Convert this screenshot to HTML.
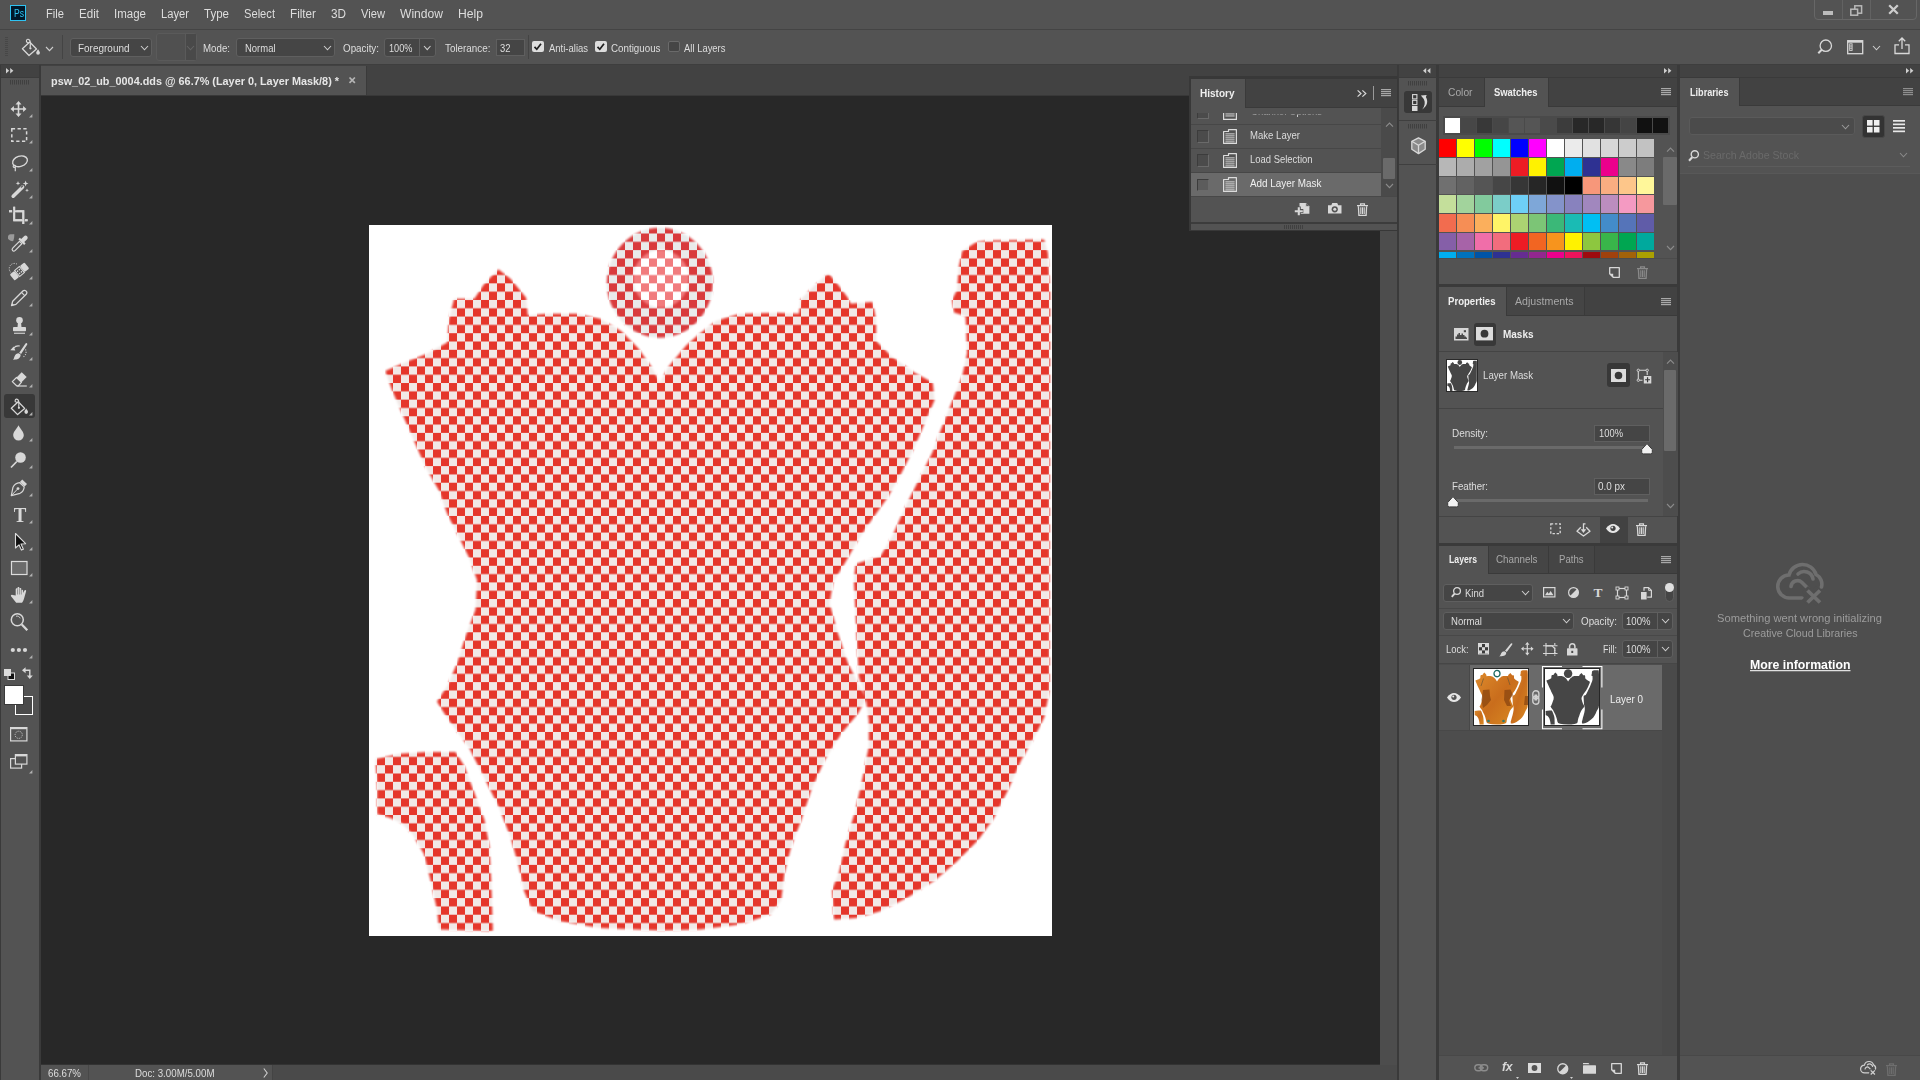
<!DOCTYPE html>
<html lang="en"><head><meta charset="utf-8"><title>Photoshop</title>
<style>
html,body{margin:0;padding:0;}
body{width:1920px;height:1080px;overflow:hidden;background:#535353;position:relative;
font-family:"Liberation Sans",sans-serif;}
.a{position:absolute;box-sizing:border-box;}
.t{white-space:nowrap;transform-origin:0 50%;}
svg{overflow:visible;}
</style></head>
<body>
<div class="a " style="left:0px;top:0px;width:1920px;height:30px;background:#535353;"></div>
<div class="a " style="left:0px;top:29px;width:1920px;height:1px;background:#444444;"></div>
<div class="a " style="left:0px;top:30px;width:1920px;height:35px;background:#535353;"></div>
<div class="a " style="left:0px;top:64px;width:1920px;height:1px;background:#3e3e3e;"></div>
<div class="a " style="left:1814px;top:-2px;width:103px;height:22px;border:1px solid #676767;border-radius:0 0 4px 4px;"></div>
<div class="a " style="left:1842px;top:0px;width:1px;height:19px;background:#626262;"></div>
<div class="a " style="left:1869.5px;top:0px;width:1px;height:19px;background:#626262;"></div>
<div class="a " style="left:0px;top:65px;width:41px;height:1015px;background:#3a3a3a;"></div>
<div class="a " style="left:1px;top:65px;width:38px;height:1015px;background:#535353;"></div>
<div class="a " style="left:1px;top:65px;width:38px;height:13px;background:#424242;"></div>
<div class="a " style="left:1px;top:77px;width:38px;height:1px;background:#3c3c3c;"></div>
<div class="a " style="left:4px;top:393.5px;width:31px;height:24.5px;background:#383838;border-radius:3px;"></div>
<div class="a " style="left:41px;top:65px;width:1357px;height:31px;background:#424242;"></div>
<div class="a " style="left:41px;top:66px;width:326px;height:30px;background:#535353;"></div>
<div class="a " style="left:366px;top:66px;width:1px;height:30px;background:#3a3a3a;"></div>
<div class="a " style="left:41px;top:95px;width:1357px;height:1px;background:#383838;"></div>
<div class="a " style="left:41px;top:96px;width:1339px;height:969px;background:#282828;"></div>
<div class="a " style="left:1380px;top:96px;width:17px;height:969px;background:#4d4d4d;"></div>
<div class="a " style="left:41px;top:1065px;width:1357px;height:15px;background:#4a4a4a;"></div>
<div class="a " style="left:41px;top:1065px;width:232px;height:15px;background:#535353;"></div>
<div class="a " style="left:41px;top:1064px;width:1339px;height:1px;background:#333333;"></div>
<div class="a " style="left:88px;top:1065px;width:1px;height:15px;background:#484848;"></div>
<div class="a " style="left:272px;top:1065px;width:1px;height:15px;background:#444444;"></div>
<div class="a " style="left:1397px;top:65px;width:2px;height:1015px;background:#3a3a3a;"></div>
<div class="a " style="left:1399px;top:65px;width:38px;height:1015px;background:#535353;"></div>
<div class="a " style="left:1399px;top:65px;width:38px;height:13px;background:#424242;"></div>
<div class="a " style="left:1436px;top:65px;width:3px;height:1015px;background:#3a3a3a;"></div>
<div class="a " style="left:1399px;top:77px;width:38px;height:1px;background:#3c3c3c;"></div>
<div class="a " style="left:1399px;top:120px;width:38px;height:1px;background:#3f3f3f;"></div>
<div class="a " style="left:1399px;top:164px;width:38px;height:1px;background:#3f3f3f;"></div>
<div class="a " style="left:1404px;top:91px;width:28px;height:22px;background:#383838;border-radius:3px;"></div>
<div class="a " style="left:1439px;top:65px;width:238px;height:1015px;background:#535353;"></div>
<div class="a " style="left:1439px;top:65px;width:238px;height:13px;background:#424242;"></div>
<div class="a " style="left:1677px;top:65px;width:3px;height:1015px;background:#3a3a3a;"></div>
<div class="a " style="left:1439px;top:78px;width:238px;height:28.5px;background:#424242;"></div>
<div class="a " style="left:1439px;top:78px;width:46px;height:27.5px;background:#454545;"></div>
<div class="a " style="left:1485px;top:78px;width:63px;height:28.5px;background:#535353;"></div>
<div class="a " style="left:1484px;top:78px;width:1px;height:28.5px;background:#3a3a3a;"></div>
<div class="a " style="left:1548px;top:78px;width:1px;height:28.5px;background:#3a3a3a;"></div>
<div class="a " style="left:1439px;top:77px;width:238px;height:1px;background:#3a3a3a;"></div>
<div class="a " style="left:1439px;top:105.5px;width:46px;height:1px;background:#3a3a3a;"></div>
<div class="a " style="left:1549px;top:105.5px;width:128px;height:1px;background:#3a3a3a;"></div>
<div class="a " style="left:1443px;top:116px;width:227px;height:19px;background:#4a4a4a;"></div>
<div class="a " style="left:1663px;top:157px;width:14px;height:48px;background:#6a6a6a;border-radius:1px;"></div>
<div class="a " style="left:1439px;top:258.3px;width:238px;height:1px;background:#4b4b4b;"></div>
<div class="a " style="left:1439px;top:284px;width:238px;height:3px;background:#3a3a3a;"></div>
<div class="a " style="left:1439px;top:287px;width:238px;height:29px;background:#424242;"></div>
<div class="a " style="left:1439px;top:287px;width:67px;height:29px;background:#535353;"></div>
<div class="a " style="left:1506px;top:287px;width:1px;height:29px;background:#3a3a3a;"></div>
<div class="a " style="left:1584px;top:287px;width:1px;height:28px;background:#3a3a3a;"></div>
<div class="a " style="left:1507px;top:287px;width:77px;height:28px;background:#454545;"></div>
<div class="a " style="left:1507px;top:315px;width:170px;height:1px;background:#3a3a3a;"></div>
<div class="a " style="left:1474px;top:323px;width:22px;height:23px;background:#383838;border-radius:3px;"></div>
<div class="a " style="left:1439px;top:351px;width:238px;height:1px;background:#444444;"></div>
<div class="a " style="left:1439px;top:408px;width:224px;height:1px;background:#444444;"></div>
<div class="a " style="left:1663px;top:352px;width:15px;height:164px;background:#4d4d4d;"></div>
<div class="a " style="left:1664px;top:370px;width:12px;height:81px;background:#6a6a6a;border-radius:1px;"></div>
<div class="a " style="left:1607px;top:363px;width:23px;height:24px;background:#383838;border-radius:3px;"></div>
<div class="a " style="left:1594px;top:425px;width:56px;height:17px;background:#454545;border:1px solid #5f5f5f;"></div>
<div class="a " style="left:1594px;top:478px;width:56px;height:17px;background:#454545;border:1px solid #5f5f5f;"></div>
<div class="a " style="left:1454px;top:445.5px;width:194px;height:3px;background:#6a6a6a;"></div>
<div class="a " style="left:1454px;top:498.5px;width:194px;height:3px;background:#6a6a6a;"></div>
<div class="a " style="left:1439px;top:516px;width:238px;height:1px;background:#444444;"></div>
<div class="a " style="left:1600px;top:517px;width:28px;height:26px;background:#424242;"></div>
<div class="a " style="left:1439px;top:543px;width:238px;height:3px;background:#3a3a3a;"></div>
<div class="a " style="left:1439px;top:546px;width:238px;height:28px;background:#424242;"></div>
<div class="a " style="left:1439px;top:546px;width:49px;height:28px;background:#535353;"></div>
<div class="a " style="left:1488px;top:546px;width:1px;height:28px;background:#3a3a3a;"></div>
<div class="a " style="left:1548px;top:546px;width:1px;height:27px;background:#3a3a3a;"></div>
<div class="a " style="left:1594px;top:546px;width:1px;height:27px;background:#3a3a3a;"></div>
<div class="a " style="left:1489px;top:546px;width:59px;height:27px;background:#454545;"></div>
<div class="a " style="left:1549px;top:546px;width:45px;height:27px;background:#454545;"></div>
<div class="a " style="left:1489px;top:573px;width:188px;height:1px;background:#3a3a3a;"></div>
<div class="a " style="left:1442.5px;top:584px;width:90px;height:18px;background:#454545;border:1px solid #5f5f5f;border-radius:3px;"></div>
<div class="a " style="left:1439px;top:608px;width:238px;height:1px;background:#484848;"></div>
<div class="a " style="left:1442.5px;top:612px;width:131px;height:18px;background:#454545;border:1px solid #5f5f5f;border-radius:3px;"></div>
<div class="a " style="left:1621.5px;top:612px;width:51.5px;height:18px;background:#454545;border:1px solid #5f5f5f;border-radius:3px;"></div>
<div class="a " style="left:1657px;top:613px;width:1px;height:16px;background:#5f5f5f;"></div>
<div class="a " style="left:1439px;top:635px;width:238px;height:1px;background:#484848;"></div>
<div class="a " style="left:1621.5px;top:640px;width:51.5px;height:18px;background:#454545;border:1px solid #5f5f5f;border-radius:3px;"></div>
<div class="a " style="left:1657px;top:641px;width:1px;height:16px;background:#5f5f5f;"></div>
<div class="a " style="left:1439px;top:663.3px;width:238px;height:1.5px;background:#464646;"></div>
<div class="a " style="left:1439px;top:664px;width:238px;height:391px;background:#4a4a4a;"></div>
<div class="a " style="left:1439px;top:664px;width:223px;height:391px;background:#4d4d4d;"></div>
<div class="a " style="left:1439px;top:664.8px;width:31px;height:66px;background:#535353;"></div>
<div class="a " style="left:1470px;top:664.8px;width:192px;height:66px;background:#6a6a6a;"></div>
<div class="a " style="left:1469px;top:664.8px;width:1px;height:66px;background:#484848;"></div>
<div class="a " style="left:1439px;top:730px;width:223px;height:1px;background:#484848;"></div>
<div class="a " style="left:1439px;top:1055px;width:238px;height:1px;background:#484848;"></div>
<div class="a " style="left:1664.5px;top:584px;width:9px;height:18px;background:#454545;border:1px solid #5f5f5f;border-radius:5px;"></div>
<div class="a " style="left:1664.5px;top:583px;width:9px;height:9px;background:#e0e0e0;border-radius:5px;"></div>
<div class="a " style="left:1680px;top:65px;width:240px;height:1015px;background:#535353;"></div>
<div class="a " style="left:1680px;top:65px;width:240px;height:13px;background:#424242;"></div>
<div class="a " style="left:1680px;top:77px;width:240px;height:1px;background:#3a3a3a;"></div>
<div class="a " style="left:1680px;top:78px;width:240px;height:28px;background:#424242;"></div>
<div class="a " style="left:1680px;top:78px;width:59px;height:28px;background:#535353;"></div>
<div class="a " style="left:1739px;top:78px;width:1px;height:28px;background:#3a3a3a;"></div>
<div class="a " style="left:1740px;top:105px;width:180px;height:1px;background:#3a3a3a;"></div>
<div class="a " style="left:1680px;top:173px;width:240px;height:882px;background:#4e4e4e;"></div>
<div class="a " style="left:1680px;top:173px;width:240px;height:1px;background:#585858;"></div>
<div class="a " style="left:1689px;top:117px;width:165.5px;height:18px;background:#4b4b4b;border:1px solid #5a5a5a;border-radius:3px;"></div>
<div class="a " style="left:1862px;top:114.5px;width:22.5px;height:23.5px;background:#333333;border-radius:3px;border:1px solid #484848;"></div>
<div class="a " style="left:1688px;top:166px;width:222px;height:1px;background:#5c5c5c;"></div>
<div class="a " style="left:1680px;top:1055px;width:240px;height:1px;background:#484848;"></div>
<div class="a " style="left:1189px;top:76px;width:209px;height:155px;background:#383838;"></div>
<div class="a " style="left:1191px;top:79px;width:206px;height:28px;background:#424242;"></div>
<div class="a " style="left:1191px;top:79px;width:54px;height:29px;background:#535353;"></div>
<div class="a " style="left:1245px;top:79px;width:1px;height:28px;background:#3a3a3a;"></div>
<div class="a " style="left:1245px;top:107px;width:152px;height:1px;background:#3a3a3a;"></div>
<div class="a " style="left:1191px;top:108px;width:206px;height:114px;background:#535353;"></div>
<div class="a " style="left:1191px;top:108px;width:190px;height:16.5px;background:#535353;"></div>
<div class="a " style="left:1191px;top:124.3px;width:190px;height:24.200000000000003px;background:#535353;"></div>
<div class="a " style="left:1191px;top:148.4px;width:190px;height:24.19999999999999px;background:#535353;"></div>
<div class="a " style="left:1191px;top:172.5px;width:190px;height:24.19999999999999px;background:#6a6a6a;"></div>
<div class="a " style="left:1191px;top:124.0px;width:190px;height:1px;background:#474747;"></div>
<div class="a " style="left:1197px;top:113px;width:12px;height:5.599999999999994px;background:#4b4b4b;border-left:1px solid #3c3c3c;border-right:1px solid #6a6a6a;border-bottom:1px solid #6a6a6a;"></div>
<div class="a " style="left:1191px;top:148.0px;width:190px;height:1px;background:#474747;"></div>
<div class="a " style="left:1197px;top:130.3px;width:12px;height:12.299999999999983px;background:#4b4b4b;border-left:1px solid #3c3c3c;border-right:1px solid #6a6a6a;border-bottom:1px solid #6a6a6a;border-top:1px solid #3c3c3c;"></div>
<div class="a " style="left:1191px;top:172.1px;width:190px;height:1px;background:#474747;"></div>
<div class="a " style="left:1197px;top:154.4px;width:12px;height:12.300000000000011px;background:#4b4b4b;border-left:1px solid #3c3c3c;border-right:1px solid #6a6a6a;border-bottom:1px solid #6a6a6a;border-top:1px solid #3c3c3c;"></div>
<div class="a " style="left:1191px;top:196.2px;width:190px;height:1px;background:#474747;"></div>
<div class="a " style="left:1197px;top:178.5px;width:12px;height:12.300000000000011px;background:#5c5c5c;border-left:1px solid #3c3c3c;border-right:1px solid #6a6a6a;border-bottom:1px solid #6a6a6a;border-top:1px solid #3c3c3c;"></div>
<div class="a " style="left:1381px;top:108px;width:16px;height:88px;background:#4a4a4a;"></div>
<div class="a " style="left:1383px;top:158px;width:12px;height:21px;background:#6a6a6a;border-radius:1px;"></div>
<div class="a " style="left:1191px;top:196px;width:206px;height:1px;background:#484848;"></div>
<div class="a " style="left:1191px;top:221.6px;width:206px;height:2px;background:#3c3c3c;"></div>
<div class="a " style="left:1191px;top:223.5px;width:206px;height:6px;background:#535353;"></div>
<div class="a " style="left:69.5px;top:38px;width:82px;height:18.5px;background:#454545;border:1px solid #5f5f5f;border-radius:3px;"></div>
<div class="a " style="left:155.5px;top:33px;width:41px;height:28px;background:#505050;border:1px solid #5a5a5a;border-radius:3px;"></div>
<div class="a " style="left:184.5px;top:34px;width:11px;height:26px;background:#494949;border-left:1px solid #5a5a5a;"></div>
<div class="a " style="left:235.5px;top:38px;width:99px;height:18.5px;background:#454545;border:1px solid #5f5f5f;border-radius:3px;"></div>
<div class="a " style="left:384px;top:38px;width:51.5px;height:18.5px;background:#454545;border:1px solid #5f5f5f;border-radius:3px;"></div>
<div class="a " style="left:419px;top:39px;width:1px;height:16.5px;background:#5f5f5f;"></div>
<div class="a " style="left:496px;top:39px;width:28.5px;height:17px;background:#454545;border:1px solid #5f5f5f;"></div>
<div class="a " style="left:62px;top:35px;width:1px;height:24px;background:#444444;"></div>
<div class="a " style="left:528px;top:35px;width:1px;height:24px;background:#444444;"></div>
<div class="a " style="left:532px;top:40.5px;width:11.5px;height:11.5px;background:#dddddd;border-radius:2px;"></div>
<div class="a " style="left:595px;top:40.5px;width:11.5px;height:11.5px;background:#dddddd;border-radius:2px;"></div>
<div class="a " style="left:668px;top:40.5px;width:11.5px;height:11.5px;background:#454545;border:1px solid #6a6a6a;border-radius:2px;"></div>
<svg class="a" style="left:0;top:0" width="1400" height="1000" viewBox="0 0 1400 1000">
<defs>
<pattern id="ck" x="1" y="0.88" width="16" height="16.6154" patternUnits="userSpaceOnUse">
<rect width="16" height="16.6154" fill="#f1e8e6"/><rect width="8" height="8.3077" fill="#e5362b"/><rect x="8" y="8.3077" width="8" height="8.3077" fill="#e5362b"/></pattern>
<pattern id="ck2" x="1" y="0.88" width="16" height="16.6154" patternUnits="userSpaceOnUse">
<rect width="16" height="16.6154" fill="#e9eaea"/><rect width="8" height="8.3077" fill="#d93a3c"/><rect x="8" y="8.3077" width="8" height="8.3077" fill="#d93a3c"/></pattern>
<pattern id="ck3" x="1" y="0.88" width="16" height="16.6154" patternUnits="userSpaceOnUse">
<rect width="16" height="16.6154" fill="#ffffff"/><rect width="8" height="8.3077" fill="#f17c7e"/><rect x="8" y="8.3077" width="8" height="8.3077" fill="#f17c7e"/></pattern>
<filter id="bl" x="-5%" y="-5%" width="110%" height="110%"><feGaussianBlur stdDeviation="1.1"/></filter>
<mask id="mk" maskUnits="userSpaceOnUse" x="360" y="220" width="700" height="720"><g filter="url(#bl)" fill="#fff" stroke="#fff" stroke-width="2.4" stroke-linejoin="round"><polygon points="386.7,371.7 410.0,361.7 426.7,355.0 448.3,343.3 450.0,320.0 455.0,300.0 475.0,300.0 485.0,285.0 498.3,270.7 510.0,280.0 525.0,298.3 526.7,316.7 546.7,315.0 576.7,315.0 600.0,320.0 620.0,331.7 636.7,348.3 650.0,366.7 660.0,385.0 670.0,366.7 686.7,346.7 700.0,335.0 716.7,322.0 740.0,315.0 776.7,314.0 800.0,315.0 801.7,300.0 815.0,286.7 828.3,275.0 836.7,285.0 846.7,298.3 850.0,305.0 871.7,303.3 875.0,320.0 875.0,341.7 890.0,356.7 913.3,373.3 931.7,383.3 933.3,400.0 923.3,423.3 913.3,446.7 900.0,473.3 886.7,496.7 870.0,520.0 856.7,540.0 843.3,563.3 832.0,582.0 828.3,603.3 836.7,633.3 846.7,663.3 856.7,683.3 865.0,698.3 856.7,713.3 840.0,733.3 823.3,760.0 810.0,790.0 800.0,820.0 790.0,846.7 783.3,873.3 780.0,900.0 770.0,913.3 740.0,923.3 700.0,928.3 660.0,929.3 600.0,926.7 560.0,920.0 533.3,910.0 525.0,890.0 520.0,866.7 511.7,836.7 500.0,806.7 483.3,773.3 470.0,746.7 450.0,720.0 438.3,701.7 448.3,686.7 458.3,663.3 466.7,636.7 476.7,610.0 478.3,580.0 470.0,556.7 460.0,536.7 448.3,513.3 440.0,490.0 426.7,466.7 415.0,440.0 403.3,413.3 393.3,390.0"/><polygon points="963.3,251.7 976.7,243.3 986.7,241.7 1043.3,240.7 1046.7,253.0 1049.0,293.0 1048.3,580.0 1048.3,690.0 1043.3,716.7 1033.3,736.7 1020.0,760.0 1006.7,790.0 993.3,816.7 976.7,840.0 956.7,860.0 933.3,880.0 906.7,896.7 880.0,910.0 856.7,916.7 835.0,918.3 833.3,890.0 840.0,873.3 846.7,843.3 856.7,810.0 863.3,780.0 870.0,746.7 870.0,720.0 866.7,696.7 860.0,676.7 858.3,646.7 856.7,613.3 855.0,580.0 856.7,565.0 881.7,556.7 893.3,536.7 906.7,506.7 920.0,480.0 933.3,453.3 943.3,426.7 953.3,401.7 963.3,376.7 968.3,353.3 966.7,315.0 955.0,311.7 953.3,300.0 958.3,290.0 960.0,266.7"/><polygon points="376.7,760.0 400.0,755.0 426.7,753.3 455.0,753.3 463.3,766.7 473.3,793.3 483.3,820.0 488.3,846.7 490.0,880.0 491.7,930.0 440.0,928.3 438.3,910.0 431.7,880.0 425.0,853.3 413.3,833.3 401.7,821.7 390.0,816.7 378.3,813.3 378.3,786.7"/></g></mask>
<mask id="mk2" maskUnits="userSpaceOnUse" x="590" y="215" width="140" height="140"><g filter="url(#bl)" fill="#fff"><ellipse cx="659.8" cy="282.8" rx="53" ry="55"/></g></mask>
<mask id="mk3" maskUnits="userSpaceOnUse" x="590" y="215" width="140" height="140"><g filter="url(#bl)" fill="#fff"><ellipse cx="661" cy="278.7" rx="28" ry="29"/></g></mask>
</defs>
<rect x="369" y="225" width="683" height="711" fill="#ffffff"/>
<rect x="369" y="225" width="683" height="711" fill="url(#ck)" mask="url(#mk)"/>
<rect x="590" y="215" width="140" height="140" fill="url(#ck2)" mask="url(#mk2)"/>
<rect x="590" y="215" width="140" height="140" fill="url(#ck3)" mask="url(#mk3)"/>
</svg>
<div class="a t" style="left:46px;top:4.67px;font-size:13px;line-height:17px;color:#dddddd;transform:scale(0.8592,1.035);">File</div>
<div class="a t" style="left:79px;top:4.67px;font-size:13px;line-height:17px;color:#dddddd;transform:scale(0.8928,1.035);">Edit</div>
<div class="a t" style="left:114px;top:4.67px;font-size:13px;line-height:17px;color:#dddddd;transform:scale(0.8856,1.035);">Image</div>
<div class="a t" style="left:161px;top:4.67px;font-size:13px;line-height:17px;color:#dddddd;transform:scale(0.8610,1.035);">Layer</div>
<div class="a t" style="left:204px;top:4.67px;font-size:13px;line-height:17px;color:#dddddd;transform:scale(0.8870,1.035);">Type</div>
<div class="a t" style="left:244px;top:4.67px;font-size:13px;line-height:17px;color:#dddddd;transform:scale(0.8579,1.035);">Select</div>
<div class="a t" style="left:290px;top:4.67px;font-size:13px;line-height:17px;color:#dddddd;transform:scale(0.8999,1.035);">Filter</div>
<div class="a t" style="left:331px;top:4.67px;font-size:13px;line-height:17px;color:#dddddd;transform:scale(0.9026,1.035);">3D</div>
<div class="a t" style="left:361px;top:4.67px;font-size:13px;line-height:17px;color:#dddddd;transform:scale(0.8589,1.035);">View</div>
<div class="a t" style="left:400px;top:4.67px;font-size:13px;line-height:17px;color:#dddddd;transform:scale(0.9299,1.035);">Window</div>
<div class="a t" style="left:458px;top:4.67px;font-size:13px;line-height:17px;color:#dddddd;transform:scale(0.9350,1.035);">Help</div>
<div class="a t" style="left:78px;top:40.67px;font-size:11px;line-height:14px;color:#dddddd;transform:scale(0.9055,1.035);">Foreground</div>
<div class="a t" style="left:203px;top:40.67px;font-size:11px;line-height:14px;color:#dddddd;transform:scale(0.8831,1.035);">Mode:</div>
<div class="a t" style="left:244.5px;top:40.67px;font-size:11px;line-height:14px;color:#dddddd;transform:scale(0.8603,1.035);">Normal</div>
<div class="a t" style="left:343px;top:40.67px;font-size:11px;line-height:14px;color:#dddddd;transform:scale(0.8922,1.035);">Opacity:</div>
<div class="a t" style="left:389px;top:40.67px;font-size:11px;line-height:14px;color:#dddddd;transform:scale(0.8352,1.035);">100%</div>
<div class="a t" style="left:444.5px;top:40.67px;font-size:11px;line-height:14px;color:#dddddd;transform:scale(0.8964,1.035);">Tolerance:</div>
<div class="a t" style="left:500px;top:40.67px;font-size:11px;line-height:14px;color:#dddddd;transform:scale(0.8581,1.035);">32</div>
<div class="a t" style="left:548.5px;top:40.67px;font-size:11px;line-height:14px;color:#dddddd;transform:scale(0.8620,1.035);">Anti-alias</div>
<div class="a t" style="left:611px;top:40.67px;font-size:11px;line-height:14px;color:#dddddd;transform:scale(0.8894,1.035);">Contiguous</div>
<div class="a t" style="left:684px;top:40.67px;font-size:11px;line-height:14px;color:#dddddd;transform:scale(0.8592,1.035);">All Layers</div>
<div class="a t" style="left:51px;top:74.47px;font-size:11px;line-height:14px;color:#e6e6e6;transform:scale(0.9863,1.035);font-weight:bold;">psw_02_ub_0004.dds @ 66.7% (Layer 0, Layer Mask/8) *</div>
<div class="a t" style="left:48px;top:1066.17px;font-size:10.5px;line-height:14px;color:#dddddd;transform:scale(0.9266,1.035);">66.67%</div>
<div class="a t" style="left:135px;top:1066.37px;font-size:10.5px;line-height:14px;color:#dddddd;transform:scale(0.9267,1.035);">Doc: 3.00M/5.00M</div>
<div class="a t" style="left:1200px;top:85.97px;font-size:11px;line-height:14px;color:#efefef;transform:scale(0.9103,1.035);font-weight:bold;">History</div>
<div class="a t" style="left:1251px;top:104.27px;font-size:11px;line-height:14px;color:#dddddd;transform:scale(0.8664,1.035);clip-path:inset(10.3px 0 0 0);">Channel Options</div>
<div class="a t" style="left:1250px;top:127.97px;font-size:11px;line-height:14px;color:#dddddd;transform:scale(0.8700,1.035);">Make Layer</div>
<div class="a t" style="left:1250px;top:151.97px;font-size:11px;line-height:14px;color:#dddddd;transform:scale(0.8587,1.035);">Load Selection</div>
<div class="a t" style="left:1250px;top:175.97px;font-size:11px;line-height:14px;color:#f0f0f0;transform:scale(0.8995,1.035);">Add Layer Mask</div>
<div class="a t" style="left:1448px;top:85.47px;font-size:11px;line-height:14px;color:#a8a8a8;transform:scale(0.9320,1.035);">Color</div>
<div class="a t" style="left:1494px;top:85.47px;font-size:11px;line-height:14px;color:#efefef;transform:scale(0.8572,1.035);font-weight:bold;">Swatches</div>
<div class="a t" style="left:1448px;top:294.47px;font-size:11px;line-height:14px;color:#efefef;transform:scale(0.8730,1.035);font-weight:bold;">Properties</div>
<div class="a t" style="left:1515px;top:294.47px;font-size:11px;line-height:14px;color:#a8a8a8;transform:scale(0.9665,1.035);">Adjustments</div>
<div class="a t" style="left:1502.5px;top:327.47px;font-size:11px;line-height:14px;color:#efefef;transform:scale(0.9068,1.035);font-weight:bold;">Masks</div>
<div class="a t" style="left:1483px;top:368.47px;font-size:11px;line-height:14px;color:#dddddd;transform:scale(0.8794,1.035);">Layer Mask</div>
<div class="a t" style="left:1452px;top:426.47px;font-size:11px;line-height:14px;color:#dddddd;transform:scale(0.9059,1.035);">Density:</div>
<div class="a t" style="left:1598.5px;top:426.47px;font-size:11px;line-height:14px;color:#dddddd;transform:scale(0.8530,1.035);">100%</div>
<div class="a t" style="left:1452px;top:479.47px;font-size:11px;line-height:14px;color:#dddddd;transform:scale(0.8787,1.035);">Feather:</div>
<div class="a t" style="left:1598px;top:479.47px;font-size:11px;line-height:14px;color:#dddddd;transform:scale(0.9010,1.035);">0.0 px</div>
<div class="a t" style="left:1448.5px;top:552.47px;font-size:11px;line-height:14px;color:#efefef;transform:scale(0.7893,1.035);font-weight:bold;">Layers</div>
<div class="a t" style="left:1496px;top:552.47px;font-size:11px;line-height:14px;color:#a8a8a8;transform:scale(0.8929,1.035);">Channels</div>
<div class="a t" style="left:1558.5px;top:552.47px;font-size:11px;line-height:14px;color:#a8a8a8;transform:scale(0.8710,1.035);">Paths</div>
<div class="a t" style="left:1465px;top:585.97px;font-size:11px;line-height:14px;color:#dddddd;transform:scale(0.8629,1.035);">Kind</div>
<div class="a t" style="left:1451px;top:613.97px;font-size:11px;line-height:14px;color:#dddddd;transform:scale(0.8744,1.035);">Normal</div>
<div class="a t" style="left:1581px;top:613.97px;font-size:11px;line-height:14px;color:#dddddd;transform:scale(0.8922,1.035);">Opacity:</div>
<div class="a t" style="left:1626px;top:613.97px;font-size:11px;line-height:14px;color:#dddddd;transform:scale(0.8708,1.035);">100%</div>
<div class="a t" style="left:1445.5px;top:642.47px;font-size:11px;line-height:14px;color:#dddddd;transform:scale(0.8557,1.035);">Lock:</div>
<div class="a t" style="left:1603px;top:642.47px;font-size:11px;line-height:14px;color:#dddddd;transform:scale(0.8183,1.035);">Fill:</div>
<div class="a t" style="left:1626px;top:642.47px;font-size:11px;line-height:14px;color:#dddddd;transform:scale(0.8708,1.035);">100%</div>
<div class="a t" style="left:1609.5px;top:691.97px;font-size:11px;line-height:14px;color:#efefef;transform:scale(0.8994,1.035);">Layer 0</div>
<div class="a t" style="left:1689.5px;top:85.47px;font-size:11px;line-height:14px;color:#efefef;transform:scale(0.8285,1.035);font-weight:bold;">Libraries</div>
<div class="a t" style="left:1703px;top:147.97px;font-size:11px;line-height:14px;color:#6a6a6a;transform:scale(0.9631,1.035);">Search Adobe Stock</div>
<div class="a t" style="left:1717px;top:610.97px;font-size:11px;line-height:14px;color:#9c9c9c;transform:scale(1.0144,1.035);">Something went wrong initializing</div>
<div class="a t" style="left:1742.5px;top:625.97px;font-size:11px;line-height:14px;color:#9c9c9c;transform:scale(0.9703,1.035);">Creative Cloud Libraries</div>
<div class="a t" style="left:1749.5px;top:656.97px;font-size:12px;line-height:16px;color:#ffffff;transform:scale(1.0255,1.035);font-weight:bold;text-decoration:underline;">More information</div>
<div class="a " style="left:1445px;top:117.5px;width:15px;height:15.5px;background:#ffffff;"></div>
<div class="a " style="left:1461px;top:117.5px;width:15px;height:15.5px;background:#474747;"></div>
<div class="a " style="left:1477px;top:117.5px;width:15px;height:15.5px;background:#383838;"></div>
<div class="a " style="left:1493px;top:117.5px;width:15px;height:15.5px;background:#464646;"></div>
<div class="a " style="left:1509px;top:117.5px;width:15px;height:15.5px;background:#555555;"></div>
<div class="a " style="left:1525px;top:117.5px;width:15px;height:15.5px;background:#555555;"></div>
<div class="a " style="left:1541px;top:117.5px;width:15px;height:15.5px;background:#4a4a4a;"></div>
<div class="a " style="left:1557px;top:117.5px;width:15px;height:15.5px;background:#3c3c3c;"></div>
<div class="a " style="left:1573px;top:117.5px;width:15px;height:15.5px;background:#282828;"></div>
<div class="a " style="left:1589px;top:117.5px;width:15px;height:15.5px;background:#282828;"></div>
<div class="a " style="left:1605px;top:117.5px;width:15px;height:15.5px;background:#363636;"></div>
<div class="a " style="left:1621px;top:117.5px;width:15px;height:15.5px;background:#444444;"></div>
<div class="a " style="left:1637px;top:117.5px;width:15px;height:15.5px;background:#111111;"></div>
<div class="a " style="left:1653px;top:117.5px;width:15px;height:15.5px;background:#111111;"></div>
<div class="a " style="left:1439px;top:139.3px;width:17px;height:17.7px;background:#ff0000;"></div>
<div class="a " style="left:1457px;top:139.3px;width:17px;height:17.7px;background:#ffff00;"></div>
<div class="a " style="left:1475px;top:139.3px;width:17px;height:17.7px;background:#00ff00;"></div>
<div class="a " style="left:1493px;top:139.3px;width:17px;height:17.7px;background:#00ffff;"></div>
<div class="a " style="left:1511px;top:139.3px;width:17px;height:17.7px;background:#0000ff;"></div>
<div class="a " style="left:1529px;top:139.3px;width:17px;height:17.7px;background:#ff00ff;"></div>
<div class="a " style="left:1547px;top:139.3px;width:17px;height:17.7px;background:#ffffff;"></div>
<div class="a " style="left:1565px;top:139.3px;width:17px;height:17.7px;background:#ebebeb;"></div>
<div class="a " style="left:1583px;top:139.3px;width:17px;height:17.7px;background:#e1e1e1;"></div>
<div class="a " style="left:1601px;top:139.3px;width:17px;height:17.7px;background:#d7d7d7;"></div>
<div class="a " style="left:1619px;top:139.3px;width:17px;height:17.7px;background:#cccccc;"></div>
<div class="a " style="left:1637px;top:139.3px;width:17px;height:17.7px;background:#c2c2c2;"></div>
<div class="a " style="left:1439px;top:158.0px;width:17px;height:17.7px;background:#b7b7b7;"></div>
<div class="a " style="left:1457px;top:158.0px;width:17px;height:17.7px;background:#acacac;"></div>
<div class="a " style="left:1475px;top:158.0px;width:17px;height:17.7px;background:#a1a1a1;"></div>
<div class="a " style="left:1493px;top:158.0px;width:17px;height:17.7px;background:#959595;"></div>
<div class="a " style="left:1511px;top:158.0px;width:17px;height:17.7px;background:#ed1c24;"></div>
<div class="a " style="left:1529px;top:158.0px;width:17px;height:17.7px;background:#fff200;"></div>
<div class="a " style="left:1547px;top:158.0px;width:17px;height:17.7px;background:#00a651;"></div>
<div class="a " style="left:1565px;top:158.0px;width:17px;height:17.7px;background:#00aeef;"></div>
<div class="a " style="left:1583px;top:158.0px;width:17px;height:17.7px;background:#2e3192;"></div>
<div class="a " style="left:1601px;top:158.0px;width:17px;height:17.7px;background:#ec008c;"></div>
<div class="a " style="left:1619px;top:158.0px;width:17px;height:17.7px;background:#898989;"></div>
<div class="a " style="left:1637px;top:158.0px;width:17px;height:17.7px;background:#7d7d7d;"></div>
<div class="a " style="left:1439px;top:176.7px;width:17px;height:17.7px;background:#707070;"></div>
<div class="a " style="left:1457px;top:176.7px;width:17px;height:17.7px;background:#626262;"></div>
<div class="a " style="left:1475px;top:176.7px;width:17px;height:17.7px;background:#555555;"></div>
<div class="a " style="left:1493px;top:176.7px;width:17px;height:17.7px;background:#464646;"></div>
<div class="a " style="left:1511px;top:176.7px;width:17px;height:17.7px;background:#363636;"></div>
<div class="a " style="left:1529px;top:176.7px;width:17px;height:17.7px;background:#262626;"></div>
<div class="a " style="left:1547px;top:176.7px;width:17px;height:17.7px;background:#111111;"></div>
<div class="a " style="left:1565px;top:176.7px;width:17px;height:17.7px;background:#000000;"></div>
<div class="a " style="left:1583px;top:176.7px;width:17px;height:17.7px;background:#f7977a;"></div>
<div class="a " style="left:1601px;top:176.7px;width:17px;height:17.7px;background:#f9ad81;"></div>
<div class="a " style="left:1619px;top:176.7px;width:17px;height:17.7px;background:#fdc68a;"></div>
<div class="a " style="left:1637px;top:176.7px;width:17px;height:17.7px;background:#fff79a;"></div>
<div class="a " style="left:1439px;top:195.4px;width:17px;height:17.7px;background:#c4df9b;"></div>
<div class="a " style="left:1457px;top:195.4px;width:17px;height:17.7px;background:#a2d39c;"></div>
<div class="a " style="left:1475px;top:195.4px;width:17px;height:17.7px;background:#82ca9d;"></div>
<div class="a " style="left:1493px;top:195.4px;width:17px;height:17.7px;background:#7bcdc8;"></div>
<div class="a " style="left:1511px;top:195.4px;width:17px;height:17.7px;background:#6ecff6;"></div>
<div class="a " style="left:1529px;top:195.4px;width:17px;height:17.7px;background:#7ea7d8;"></div>
<div class="a " style="left:1547px;top:195.4px;width:17px;height:17.7px;background:#8493ca;"></div>
<div class="a " style="left:1565px;top:195.4px;width:17px;height:17.7px;background:#8882be;"></div>
<div class="a " style="left:1583px;top:195.4px;width:17px;height:17.7px;background:#a187be;"></div>
<div class="a " style="left:1601px;top:195.4px;width:17px;height:17.7px;background:#bc8dbf;"></div>
<div class="a " style="left:1619px;top:195.4px;width:17px;height:17.7px;background:#f49ac2;"></div>
<div class="a " style="left:1637px;top:195.4px;width:17px;height:17.7px;background:#f6989d;"></div>
<div class="a " style="left:1439px;top:214.1px;width:17px;height:17.7px;background:#f26c4f;"></div>
<div class="a " style="left:1457px;top:214.1px;width:17px;height:17.7px;background:#f68e55;"></div>
<div class="a " style="left:1475px;top:214.1px;width:17px;height:17.7px;background:#fbaf5c;"></div>
<div class="a " style="left:1493px;top:214.1px;width:17px;height:17.7px;background:#fff467;"></div>
<div class="a " style="left:1511px;top:214.1px;width:17px;height:17.7px;background:#acd372;"></div>
<div class="a " style="left:1529px;top:214.1px;width:17px;height:17.7px;background:#7cc576;"></div>
<div class="a " style="left:1547px;top:214.1px;width:17px;height:17.7px;background:#3bb878;"></div>
<div class="a " style="left:1565px;top:214.1px;width:17px;height:17.7px;background:#1abbb4;"></div>
<div class="a " style="left:1583px;top:214.1px;width:17px;height:17.7px;background:#00bff3;"></div>
<div class="a " style="left:1601px;top:214.1px;width:17px;height:17.7px;background:#438cca;"></div>
<div class="a " style="left:1619px;top:214.1px;width:17px;height:17.7px;background:#5574b9;"></div>
<div class="a " style="left:1637px;top:214.1px;width:17px;height:17.7px;background:#605ca8;"></div>
<div class="a " style="left:1439px;top:232.8px;width:17px;height:17.7px;background:#855fa8;"></div>
<div class="a " style="left:1457px;top:232.8px;width:17px;height:17.7px;background:#a763a8;"></div>
<div class="a " style="left:1475px;top:232.8px;width:17px;height:17.7px;background:#f06ea9;"></div>
<div class="a " style="left:1493px;top:232.8px;width:17px;height:17.7px;background:#f26d7d;"></div>
<div class="a " style="left:1511px;top:232.8px;width:17px;height:17.7px;background:#ed1c24;"></div>
<div class="a " style="left:1529px;top:232.8px;width:17px;height:17.7px;background:#f26522;"></div>
<div class="a " style="left:1547px;top:232.8px;width:17px;height:17.7px;background:#f7941d;"></div>
<div class="a " style="left:1565px;top:232.8px;width:17px;height:17.7px;background:#fff200;"></div>
<div class="a " style="left:1583px;top:232.8px;width:17px;height:17.7px;background:#8dc73f;"></div>
<div class="a " style="left:1601px;top:232.8px;width:17px;height:17.7px;background:#39b54a;"></div>
<div class="a " style="left:1619px;top:232.8px;width:17px;height:17.7px;background:#00a651;"></div>
<div class="a " style="left:1637px;top:232.8px;width:17px;height:17.7px;background:#00a99d;"></div>
<div class="a " style="left:1439px;top:251.5px;width:17px;height:6.5px;background:#00aeef;"></div>
<div class="a " style="left:1457px;top:251.5px;width:17px;height:6.5px;background:#0072bc;"></div>
<div class="a " style="left:1475px;top:251.5px;width:17px;height:6.5px;background:#0054a6;"></div>
<div class="a " style="left:1493px;top:251.5px;width:17px;height:6.5px;background:#2e3192;"></div>
<div class="a " style="left:1511px;top:251.5px;width:17px;height:6.5px;background:#662d91;"></div>
<div class="a " style="left:1529px;top:251.5px;width:17px;height:6.5px;background:#92278f;"></div>
<div class="a " style="left:1547px;top:251.5px;width:17px;height:6.5px;background:#ec008c;"></div>
<div class="a " style="left:1565px;top:251.5px;width:17px;height:6.5px;background:#ed145b;"></div>
<div class="a " style="left:1583px;top:251.5px;width:17px;height:6.5px;background:#9e0b0f;"></div>
<div class="a " style="left:1601px;top:251.5px;width:17px;height:6.5px;background:#a0410d;"></div>
<div class="a " style="left:1619px;top:251.5px;width:17px;height:6.5px;background:#a36209;"></div>
<div class="a " style="left:1637px;top:251.5px;width:17px;height:6.5px;background:#aba000;"></div>
<svg class="a" style="left:5.8px;top:68.3px;" width="7.4" height="5.4" viewBox="0 0 7.4 5.4"><path d="M0 0L3.2 2.7L0 5.4zM4.2 0L7.4 2.7L4.2 5.4z" fill="#d0d0d0"/></svg>
<svg class="a" style="left:1423.3px;top:68.3px;" width="7.4" height="5.4" viewBox="0 0 7.4 5.4"><path d="M3.2 0L0 2.7L3.2 5.4zM7.4 0L4.2 2.7L7.4 5.4z" fill="#d0d0d0"/></svg>
<svg class="a" style="left:1663.8px;top:68.3px;" width="7.4" height="5.4" viewBox="0 0 7.4 5.4"><path d="M0 0L3.2 2.7L0 5.4zM4.2 0L7.4 2.7L4.2 5.4z" fill="#d0d0d0"/></svg>
<svg class="a" style="left:1905.8px;top:68.3px;" width="7.4" height="5.4" viewBox="0 0 7.4 5.4"><path d="M0 0L3.2 2.7L0 5.4zM4.2 0L7.4 2.7L4.2 5.4z" fill="#d0d0d0"/></svg>
<svg class="a" style="left:10px;top:80px;" width="19" height="4.5" viewBox="0 0 19 4.5"><rect x="0" y="0" width="1" height="4.5" fill="#404040"/><rect x="2" y="0" width="1" height="4.5" fill="#404040"/><rect x="4" y="0" width="1" height="4.5" fill="#404040"/><rect x="6" y="0" width="1" height="4.5" fill="#404040"/><rect x="8" y="0" width="1" height="4.5" fill="#404040"/><rect x="10" y="0" width="1" height="4.5" fill="#404040"/><rect x="12" y="0" width="1" height="4.5" fill="#404040"/><rect x="14" y="0" width="1" height="4.5" fill="#404040"/><rect x="16" y="0" width="1" height="4.5" fill="#404040"/><rect x="18" y="0" width="1" height="4.5" fill="#404040"/></svg>
<svg class="a" style="left:1408px;top:81px;" width="20" height="4.5" viewBox="0 0 20 4.5"><rect x="0" y="0" width="1" height="4.5" fill="#404040"/><rect x="2" y="0" width="1" height="4.5" fill="#404040"/><rect x="4" y="0" width="1" height="4.5" fill="#404040"/><rect x="6" y="0" width="1" height="4.5" fill="#404040"/><rect x="8" y="0" width="1" height="4.5" fill="#404040"/><rect x="10" y="0" width="1" height="4.5" fill="#404040"/><rect x="12" y="0" width="1" height="4.5" fill="#404040"/><rect x="14" y="0" width="1" height="4.5" fill="#404040"/><rect x="16" y="0" width="1" height="4.5" fill="#404040"/><rect x="18" y="0" width="1" height="4.5" fill="#404040"/></svg>
<svg class="a" style="left:1408px;top:124px;" width="20" height="4.5" viewBox="0 0 20 4.5"><rect x="0" y="0" width="1" height="4.5" fill="#404040"/><rect x="2" y="0" width="1" height="4.5" fill="#404040"/><rect x="4" y="0" width="1" height="4.5" fill="#404040"/><rect x="6" y="0" width="1" height="4.5" fill="#404040"/><rect x="8" y="0" width="1" height="4.5" fill="#404040"/><rect x="10" y="0" width="1" height="4.5" fill="#404040"/><rect x="12" y="0" width="1" height="4.5" fill="#404040"/><rect x="14" y="0" width="1" height="4.5" fill="#404040"/><rect x="16" y="0" width="1" height="4.5" fill="#404040"/><rect x="18" y="0" width="1" height="4.5" fill="#404040"/></svg>
<svg class="a" style="left:5px;top:37px;" width="3" height="20" viewBox="0 0 3 20"><rect x="0" y="0" width="3" height="1" fill="#474747"/><rect x="0" y="2" width="3" height="1" fill="#474747"/><rect x="0" y="4" width="3" height="1" fill="#474747"/><rect x="0" y="6" width="3" height="1" fill="#474747"/><rect x="0" y="8" width="3" height="1" fill="#474747"/><rect x="0" y="10" width="3" height="1" fill="#474747"/><rect x="0" y="12" width="3" height="1" fill="#474747"/><rect x="0" y="14" width="3" height="1" fill="#474747"/><rect x="0" y="16" width="3" height="1" fill="#474747"/><rect x="0" y="18" width="3" height="1" fill="#474747"/></svg>
<svg class="a" style="left:1660.5px;top:88px;" width="10" height="8" viewBox="0 0 10 8"><rect x="0" y="0" width="10" height="1.2" fill="#a8a8a8"/><rect x="0" y="2" width="10" height="1.2" fill="#a8a8a8"/><rect x="0" y="4" width="10" height="1.2" fill="#a8a8a8"/><rect x="0" y="6" width="10" height="1.2" fill="#a8a8a8"/></svg>
<svg class="a" style="left:1660.5px;top:297.5px;" width="10" height="8" viewBox="0 0 10 8"><rect x="0" y="0" width="10" height="1.2" fill="#a8a8a8"/><rect x="0" y="2" width="10" height="1.2" fill="#a8a8a8"/><rect x="0" y="4" width="10" height="1.2" fill="#a8a8a8"/><rect x="0" y="6" width="10" height="1.2" fill="#a8a8a8"/></svg>
<svg class="a" style="left:1661px;top:556px;" width="10" height="8" viewBox="0 0 10 8"><rect x="0" y="0" width="10" height="1.2" fill="#a8a8a8"/><rect x="0" y="2" width="10" height="1.2" fill="#a8a8a8"/><rect x="0" y="4" width="10" height="1.2" fill="#a8a8a8"/><rect x="0" y="6" width="10" height="1.2" fill="#a8a8a8"/></svg>
<svg class="a" style="left:1903px;top:88px;" width="10" height="8" viewBox="0 0 10 8"><rect x="0" y="0" width="10" height="1.2" fill="#8e8e8e"/><rect x="0" y="2" width="10" height="1.2" fill="#8e8e8e"/><rect x="0" y="4" width="10" height="1.2" fill="#8e8e8e"/><rect x="0" y="6" width="10" height="1.2" fill="#8e8e8e"/></svg>
<svg class="a" style="left:1381px;top:89px;" width="10" height="8" viewBox="0 0 10 8"><rect x="0" y="0" width="10" height="1.2" fill="#a8a8a8"/><rect x="0" y="2" width="10" height="1.2" fill="#a8a8a8"/><rect x="0" y="4" width="10" height="1.2" fill="#a8a8a8"/><rect x="0" y="6" width="10" height="1.2" fill="#a8a8a8"/></svg>
<svg class="a" style="left:9px;top:99px;" width="20" height="20" viewBox="0 0 20 20"><g fill="#d8d8d8" stroke="none"><path d="M9.5 4v12M3.5 10h12" stroke="#d8d8d8" fill="none" stroke-width="1.6"/><path d="M9.5 2l3 3.4h-6zM9.5 18l3-3.4h-6zM1.5 10l3.4-3v6zM17.5 10l-3.4-3v6z"/></g></svg>
<svg class="a" style="left:29px;top:114.3px;" width="3.4" height="3.4" viewBox="0 0 3.4 3.4"><path d="M3.4 0V3.4H0z" fill="#b0b0b0"/></svg>
<svg class="a" style="left:9px;top:125px;" width="20" height="20" viewBox="0 0 20 20"><g fill="#d8d8d8" stroke="none"><rect x="2.8" y="3.7" width="14.8" height="12.6" stroke="#d8d8d8" fill="none" stroke-width="1.5" stroke-dasharray="3.3 2.45"/></g></svg>
<svg class="a" style="left:29px;top:140.3px;" width="3.4" height="3.4" viewBox="0 0 3.4 3.4"><path d="M3.4 0V3.4H0z" fill="#b0b0b0"/></svg>
<svg class="a" style="left:9px;top:153px;" width="20" height="20" viewBox="0 0 20 20"><g fill="#d8d8d8" stroke="none"><ellipse cx="11" cy="8.3" rx="7.6" ry="5.1" transform="rotate(-18 11 8.3)" stroke="#d8d8d8" fill="none" stroke-width="1.4"/><path d="M5.2 12.2c-1.6 0.6-1.2 2.6 0.6 2.2c1.2-0.3 1-2-0.6-2.2M6.3 14.2v4" stroke="#d8d8d8" fill="none" stroke-width="1.2"/></g></svg>
<svg class="a" style="left:29px;top:168.3px;" width="3.4" height="3.4" viewBox="0 0 3.4 3.4"><path d="M3.4 0V3.4H0z" fill="#b0b0b0"/></svg>
<svg class="a" style="left:9px;top:179.5px;" width="20" height="20" viewBox="0 0 20 20"><g fill="#d8d8d8" stroke="none"><path d="M4.2 16.2L13.6 7" stroke="#d8d8d8" stroke-width="3.6" stroke-linecap="round"/><path d="M12.3 7.2l1.4-1.3" stroke="#535353" stroke-width="1.2" stroke-linecap="round"/><path d="M9 1l.6 1.7 1.7.6-1.7.6L9 5.6l-.6-1.7-1.7-.6 1.7-.6zM16.6 .6l.8 2.1 2.1.8-2.1.8-.8 2.1-.8-2.1-2.1-.8 2.1-.8zM18 8.4l.5 1.4 1.4.5-1.4.5-.5 1.4-.5-1.4-1.4-.5 1.4-.5z"/></g></svg>
<svg class="a" style="left:29px;top:194.8px;" width="3.4" height="3.4" viewBox="0 0 3.4 3.4"><path d="M3.4 0V3.4H0z" fill="#b0b0b0"/></svg>
<svg class="a" style="left:9px;top:206px;" width="20" height="20" viewBox="0 0 20 20"><g fill="#d8d8d8" stroke="none"><path d="M5.2 0.8V14.2H18.6M0 5.3H14.3V18" stroke="#d8d8d8" fill="none" stroke-width="1.9"/><rect x="3" y="4" width="4.4" height="2.6" fill="#535353"/><rect x="13" y="12.8" width="2.7" height="2.7" fill="#535353"/><path d="M5.2 0.8V14.2H14.3V5.3H5.2" stroke="#d8d8d8" fill="none" stroke-width="1.9"/><path d="M0 5.3H3.2M16 14.2H18.6M14.3 14.2V18" stroke="#d8d8d8" fill="none" stroke-width="1.9"/></g></svg>
<svg class="a" style="left:29px;top:221.3px;" width="3.4" height="3.4" viewBox="0 0 3.4 3.4"><path d="M3.4 0V3.4H0z" fill="#b0b0b0"/></svg>
<svg class="a" style="left:9px;top:233.5px;" width="20" height="20" viewBox="0 0 20 20"><g fill="#d8d8d8" stroke="none"><path d="M3.6 16.6c-.9-.9-.4-2 .3-2.7L10.5 7.3l2.4 2.4L6.3 16.3c-.7.7-1.8 1.2-2.7.3z" stroke="#d8d8d8" fill="none" stroke-width="1.2"/><path d="M9.4 5.2l1.5-1.5 1.3 1.3 2.6-2.6c1-1 2.5-1 3.3-.2s.8 2.300-.2 3.300l-2.600 2.600 1.300 1.300-1.500 1.500z"/><path d="M-1 2.500c.5-1.700 1.500-2.500 3-2.300s2.300.300 3.200-.300c.300 2.300-.200 5-1 7.200c-1.700.400-3.800-.800-5.200-2.300z" fill="#9a9a9a"/></g></svg>
<svg class="a" style="left:29px;top:248.8px;" width="3.4" height="3.4" viewBox="0 0 3.4 3.4"><path d="M3.4 0V3.4H0z" fill="#b0b0b0"/></svg>
<svg class="a" style="left:9px;top:260.5px;" width="20" height="20" viewBox="0 0 20 20"><g fill="#d8d8d8" stroke="none"><g transform="rotate(-40 10.5 10.5)"><rect x="1" y="6.600" width="5.800" height="7.800" rx="1.200"/><rect x="14.200" y="6.600" width="5.800" height="7.800" rx="1.200"/><rect x="7.400" y="6.600" width="6.200" height="7.800" stroke="#d8d8d8" fill="none" stroke-width="1.100"/><circle cx="9.300" cy="9" r=".8"/><circle cx="11.700" cy="9" r=".8"/><circle cx="9.300" cy="12" r=".8"/><circle cx="11.700" cy="12" r=".8"/></g><path d="M2 11.500A4.600 4.600 0 0 1 8.800 3.700" stroke="#d8d8d8" fill="none" stroke-width="1" stroke-dasharray="1 1.300"/></g></svg>
<svg class="a" style="left:29px;top:275.8px;" width="3.4" height="3.4" viewBox="0 0 3.4 3.4"><path d="M3.4 0V3.4H0z" fill="#b0b0b0"/></svg>
<svg class="a" style="left:9px;top:287.5px;" width="20" height="20" viewBox="0 0 20 20"><g fill="#d8d8d8" stroke="none"><path d="M2.500 17.600l1.200-4.400L13.900 3c.9-.9 2.100-.9 2.900-.1l.5.500c.8.800.7 2-.1 2.800L6.900 16.400z" stroke="#d8d8d8" fill="none" stroke-width="1.300" stroke-linejoin="round"/><path d="M12.500 4.400l3.200 3.200" stroke="#d8d8d8" fill="none" stroke-width="1.100"/><path d="M2.500 17.600l.7-2.600 1.900 1.900z"/></g></svg>
<svg class="a" style="left:29px;top:302.8px;" width="3.4" height="3.4" viewBox="0 0 3.4 3.4"><path d="M3.4 0V3.4H0z" fill="#b0b0b0"/></svg>
<svg class="a" style="left:9px;top:316.2px;" width="20" height="20" viewBox="0 0 20 20"><g fill="#d8d8d8" stroke="none"><circle cx="10.500" cy="4.200" r="3.300"/><path d="M9 6h3l.500 5.200h-4z"/><rect x="4" y="11" width="13" height="4.300" rx=".8"/><rect x="5" y="16.700" width="11" height="1.100"/></g></svg>
<svg class="a" style="left:29px;top:331.5px;" width="3.4" height="3.4" viewBox="0 0 3.4 3.4"><path d="M3.4 0V3.4H0z" fill="#b0b0b0"/></svg>
<svg class="a" style="left:9px;top:342px;" width="20" height="20" viewBox="0 0 20 20"><g fill="#d8d8d8" stroke="none"><path d="M17.800 1.200c.6.400.6 1 .3 1.600l-6 9.300-1.900-1.300 6.300-9.200c.3-.5.800-.7 1.300-.4z"/><path d="M9.700 11.300l1.900 1.300c.3 2-1 4-3.300 4.600c-1.600.400-3.200.300-4.300.900c.900-1.300 1-2.500 1.600-3.900c.7-1.700 2.300-2.900 4.100-2.900z"/><path d="M1.300 8.200l3.400-3.600 1.600 3.800z"/><path d="M4.800 6c1.500-2 3.800-2.500 6-2" stroke="#d8d8d8" fill="none" stroke-width="1.200"/><path d="M16.500 7.500c1.300 3 .3 6-2.800 8" stroke="#d8d8d8" fill="none" stroke-width="1.100" stroke-dasharray="1 1.400"/></g></svg>
<svg class="a" style="left:29px;top:357.3px;" width="3.4" height="3.4" viewBox="0 0 3.4 3.4"><path d="M3.4 0V3.4H0z" fill="#b0b0b0"/></svg>
<svg class="a" style="left:9px;top:369px;" width="20" height="20" viewBox="0 0 20 20"><g fill="#d8d8d8" stroke="none"><path d="M7.500 8.500L12.700 3.300l5 4.700-5.200 5.200z"/><path d="M7.500 8.500L3.300 12.600l4.600 4.400h1.400l3.200-3.800z" stroke="#d8d8d8" fill="none" stroke-width="1.200" stroke-linejoin="round"/><path d="M8 17h9.800" stroke="#d8d8d8" fill="none" stroke-width="1.200"/></g></svg>
<svg class="a" style="left:29px;top:384.3px;" width="3.4" height="3.4" viewBox="0 0 3.4 3.4"><path d="M3.4 0V3.4H0z" fill="#b0b0b0"/></svg>
<svg class="a" style="left:9px;top:396.5px;" width="20" height="20" viewBox="0 0 20 20"><g fill="#d8d8d8" stroke="none"><path d="M9.200 4.800L15.700 11.400 8.600 17.600 2.300 11.200z" stroke="#d8d8d8" fill="none" stroke-width="1.300" stroke-linejoin="round"/><path d="M9.800 10.200V5.500C9.800 1.500 5.600 .8 6.200 4.700L8.300 5.600" stroke="#d8d8d8" fill="none" stroke-width="1.100"/><circle cx="9.900" cy="10.800" r="1.100"/><path d="M17.200 11.600c1.200 1.700 1.800 2.700 1.800 3.500a1.800 1.800 0 0 1-3.600 0c0-.8.600-1.800 1.800-3.500z"/></g></svg>
<svg class="a" style="left:29px;top:411.8px;" width="3.4" height="3.4" viewBox="0 0 3.4 3.4"><path d="M3.4 0V3.4H0z" fill="#b0b0b0"/></svg>
<svg class="a" style="left:9px;top:423px;" width="20" height="20" viewBox="0 0 20 20"><g fill="#d8d8d8" stroke="none"><path d="M9.500 2.200C11.500 6 14.800 8.800 14.800 12.300A5.300 5.300 0 0 1 4.200 12.300C4.200 8.800 7.500 6 9.500 2.200z"/></g></svg>
<svg class="a" style="left:29px;top:438.3px;" width="3.4" height="3.4" viewBox="0 0 3.4 3.4"><path d="M3.4 0V3.4H0z" fill="#b0b0b0"/></svg>
<svg class="a" style="left:9px;top:450px;" width="20" height="20" viewBox="0 0 20 20"><g fill="#d8d8d8" stroke="none"><circle cx="11.500" cy="7.500" r="5.300"/><path d="M7.800 11.500L2 17.500" stroke="#d8d8d8" fill="none" stroke-width="1.700"/></g></svg>
<svg class="a" style="left:29px;top:465.3px;" width="3.4" height="3.4" viewBox="0 0 3.4 3.4"><path d="M3.4 0V3.4H0z" fill="#b0b0b0"/></svg>
<svg class="a" style="left:9px;top:478px;" width="20" height="20" viewBox="0 0 20 20"><g fill="#d8d8d8" stroke="none"><path d="M13.200 1.500l4.800 4.500-2.300 2.500-4.800-4.500z"/><path d="M10.700 4.700l4.500 4.200c-.3 3.200-1.700 5.300-4.200 6.400L2.300 17.600 4 9.200C5.300 6.600 7.600 5.100 10.700 4.700z" stroke="#d8d8d8" fill="none" stroke-width="1.200" stroke-linejoin="round"/><path d="M2.600 17.300l6-6.300" stroke="#d8d8d8" fill="none" stroke-width="1"/><circle cx="9" cy="10.600" r="1.400"/></g></svg>
<svg class="a" style="left:29px;top:493.3px;" width="3.4" height="3.4" viewBox="0 0 3.4 3.4"><path d="M3.4 0V3.4H0z" fill="#b0b0b0"/></svg>
<div class="a" style="left:11px;top:503px;width:18px;text-align:center;font-family:'Liberation Serif',serif;font-weight:bold;font-size:21px;line-height:24px;color:#d8d8d8;transform:scaleX(.9);">T</div>
<svg class="a" style="left:29px;top:519.8px;" width="3.4" height="3.4" viewBox="0 0 3.4 3.4"><path d="M3.4 0V3.4H0z" fill="#b0b0b0"/></svg>
<svg class="a" style="left:9px;top:531.5px;" width="20" height="20" viewBox="0 0 20 20"><g fill="#d8d8d8" stroke="none"><path d="M6.500 1.500V16l3.500-3.200 2.400 5.300 2-.9-2.400-5.200 4.600-.300z" fill="#111" stroke="#dcdcdc" stroke-width="1.100" stroke-linejoin="round"/></g></svg>
<svg class="a" style="left:29px;top:546.8px;" width="3.4" height="3.4" viewBox="0 0 3.4 3.4"><path d="M3.4 0V3.4H0z" fill="#b0b0b0"/></svg>
<svg class="a" style="left:9px;top:558px;" width="20" height="20" viewBox="0 0 20 20"><g fill="#d8d8d8" stroke="none"><rect x="2.500" y="3.500" width="15.500" height="13" fill="#6b6b6b" stroke="#dcdcdc" stroke-width="1.200"/></g></svg>
<svg class="a" style="left:29px;top:573.3px;" width="3.4" height="3.4" viewBox="0 0 3.4 3.4"><path d="M3.4 0V3.4H0z" fill="#b0b0b0"/></svg>
<svg class="a" style="left:9px;top:585px;" width="20" height="20" viewBox="0 0 20 20"><g fill="#d8d8d8" stroke="none"><path d="M6.700 10.500V4.300c0-1.300 1.800-1.300 1.800 0V3c0-1.400 1.900-1.400 1.900 0v1c0-1.300 1.900-1.300 1.900 0v1.600c0-1.200 1.800-1.200 1.800 0V8l1.300-2.500c.6-1.100 2.100-.4 1.700.8L15.500 12c-.6 2.700-1.500 4.500-2.500 5.700H7.200C6 16.500 4.200 13.800 2.200 11.500c-.9-1 .3-2.200 1.400-1.400z"/><path d="M8.500 4.300V9.500M10.400 3.500V9.500M12.300 4.500V9.500" stroke="#535353" stroke-width=".5" fill="none"/></g></svg>
<svg class="a" style="left:29px;top:600.3px;" width="3.4" height="3.4" viewBox="0 0 3.4 3.4"><path d="M3.4 0V3.4H0z" fill="#b0b0b0"/></svg>
<svg class="a" style="left:9px;top:612px;" width="20" height="20" viewBox="0 0 20 20"><g fill="#d8d8d8" stroke="none"><circle cx="8.300" cy="7.800" r="6" stroke="#d8d8d8" fill="none" stroke-width="1.500"/><path d="M12.800 12.500L18.300 18.200" stroke="#d8d8d8" fill="none" stroke-width="2.300"/><path d="M7 4.200c1.800-.5 3.600.5 4.200 2.100" stroke="#d8d8d8" fill="none" stroke-width=".9"/></g></svg>
<svg class="a" style="left:9px;top:639.5px;" width="20" height="20" viewBox="0 0 20 20"><g fill="#d8d8d8" stroke="none"><circle cx="3.800" cy="10" r="2.100"/><circle cx="9.900" cy="10" r="2.100"/><circle cx="16" cy="10" r="2.100"/></g></svg>
<svg class="a" style="left:29px;top:654.8px;" width="3.4" height="3.4" viewBox="0 0 3.4 3.4"><path d="M3.4 0V3.4H0z" fill="#b0b0b0"/></svg>
<svg class="a" style="left:3.5px;top:669px;" width="11" height="11" viewBox="0 0 11 11"><rect x="4" y="4" width="6.500" height="6.500" fill="#111" stroke="#dcdcdc" stroke-width="1"/><rect x="0" y="0" width="7" height="7" fill="#dcdcdc"/></svg>
<svg class="a" style="left:21.5px;top:667px;" width="11" height="12" viewBox="0 0 11 12"><path d="M2.500 3.200H7.800V9" stroke="#d8d8d8" fill="none" stroke-width="1.400"/><path d="M0 3.200L3.600 .2V6.200zM7.800 12L4.800 8.400H10.800z" fill="#d8d8d8"/></svg>
<div class="a " style="left:14.5px;top:696px;width:18.5px;height:19px;background:#4a4a4a;border:1px solid #ffffff;"></div>
<div class="a " style="left:4px;top:685px;width:20px;height:20px;background:#3a3a3a;"></div>
<div class="a " style="left:4.7px;top:685.6px;width:18.5px;height:18.8px;background:#ffffff;"></div>
<svg class="a" style="left:10px;top:726.5px;" width="17.5" height="14.5" viewBox="0 0 17.5 14.5"><rect x=".6" y=".6" width="16.300" height="13.300" stroke="#d8d8d8" fill="none" stroke-width="1.200"/><rect x=".6" y=".6" width="16.300" height="1.600" fill="#d8d8d8"/><circle cx="8.700" cy="7.800" r="3.600" stroke="#d8d8d8" fill="none" stroke-width="1" stroke-dasharray="1 1.200"/></svg>
<svg class="a" style="left:10px;top:754px;" width="17.5" height="15" viewBox="0 0 17.5 15"><rect x=".6" y="4.600" width="11" height="9.500" stroke="#d8d8d8" fill="none" stroke-width="1.200"/><rect x="5.400" y=".6" width="11.500" height="9.500" fill="#535353" stroke="#d8d8d8" stroke-width="1.200"/><rect x="5.400" y=".6" width="11.500" height="1.800" fill="#d8d8d8"/></svg>
<svg class="a" style="left:29px;top:769.5px;" width="3.4" height="3.4" viewBox="0 0 3.4 3.4"><path d="M3.400 0V3.400H0z" fill="#b0b0b0"/></svg>
<div class="a " style="left:10px;top:5px;width:16px;height:16.3px;background:#00182a;border:1.4px solid #2fc3f2;"></div>
<div class="a t" style="left:13.6px;top:6.700px;font-size:10.500px;line-height:13px;color:#2fc3f2;transform:scaleX(.82);">Ps</div>
<svg class="a" style="left:20px;top:36.5px;" width="21" height="21" viewBox="0 0 20 20"><g fill="#d8d8d8"><path d="M9.200 4.800L15.700 11.400 8.600 17.600 2.300 11.200z" stroke="#d8d8d8" fill="none" stroke-width="1.200" stroke-linejoin="round"/><path d="M9.800 10.200V5.500C9.800 1.500 5.600 .8 6.200 4.700L8.300 5.600" stroke="#d8d8d8" fill="none" stroke-width="1.100"/><circle cx="9.900" cy="10.800" r="1.100"/><path d="M17.200 11.600c1.200 1.700 1.800 2.700 1.800 3.500a1.800 1.800 0 0 1-3.600 0c0-.8.600-1.800 1.800-3.500z"/></g></svg>
<svg class="a" style="left:46.0px;top:47.2px;" width="7" height="3.6" viewBox="0 0 7 3.6"><path d="M0 0L3.5 3.6L7 0" fill="none" stroke="#cfcfcf" stroke-width="1.1"/></svg>
<svg class="a" style="left:141.0px;top:46.1px;" width="7" height="3.8" viewBox="0 0 7 3.8"><path d="M0 0L3.5 3.8L7 0" fill="none" stroke="#cfcfcf" stroke-width="1.1"/></svg>
<svg class="a" style="left:186.5px;top:46.1px;" width="7" height="3.8" viewBox="0 0 7 3.8"><path d="M0 0L3.5 3.8L7 0" fill="none" stroke="#646464" stroke-width="1.1"/></svg>
<svg class="a" style="left:324.0px;top:46.1px;" width="7" height="3.8" viewBox="0 0 7 3.8"><path d="M0 0L3.5 3.8L7 0" fill="none" stroke="#cfcfcf" stroke-width="1.1"/></svg>
<svg class="a" style="left:424.25px;top:46.2px;" width="6.5" height="3.6" viewBox="0 0 6.5 3.6"><path d="M0 0L3.25 3.6L6.5 0" fill="none" stroke="#cfcfcf" stroke-width="1.1"/></svg>
<svg class="a" style="left:532px;top:40.5px;" width="11.5" height="11.5" viewBox="0 0 11.5 11.5"><path d="M2.500 5.800L4.800 8.300L9 2.800" fill="none" stroke="#1e1e1e" stroke-width="1.700"/></svg>
<svg class="a" style="left:595px;top:40.5px;" width="11.5" height="11.5" viewBox="0 0 11.5 11.5"><path d="M2.500 5.800L4.800 8.300L9 2.800" fill="none" stroke="#1e1e1e" stroke-width="1.700"/></svg>
<div class="a " style="left:1823px;top:11px;width:10px;height:3.7px;background:#bcbcbc;"></div>
<svg class="a" style="left:1850px;top:5px;" width="12.5" height="11" viewBox="0 0 12.5 11"><rect x="4.800" y=".8" width="6.800" height="7.400" fill="none" stroke="#b8b8b8" stroke-width="1.500"/><rect x=".8" y="4.200" width="6.800" height="6" fill="#535353" stroke="#b8b8b8" stroke-width="1.500"/></svg>
<svg class="a" style="left:1887.5px;top:5px;" width="11" height="9" viewBox="0 0 11 9"><path d="M1.200 .3L9.800 8.700M9.800 .3L1.200 8.700" stroke="#cdcdcd" stroke-width="2.300" fill="none"/></svg>
<svg class="a" style="left:1817px;top:39px;" width="16" height="16" viewBox="0 0 16 16"><circle cx="8.800" cy="6.700" r="5.700" stroke="#d8d8d8" fill="none" stroke-width="1.300"/><path d="M4.700 10.800L1.300 14.300" stroke="#d8d8d8" fill="none" stroke-width="2"/></svg>
<svg class="a" style="left:1847px;top:40px;" width="16.5" height="14.5" viewBox="0 0 16.5 14.5"><rect x=".7" y=".7" width="15" height="13" stroke="#d8d8d8" fill="none" stroke-width="1.300"/><rect x=".7" y=".7" width="15" height="2" fill="#d8d8d8"/><rect x="2.700" y="3.800" width="2.400" height="6.600" stroke="#d8d8d8" fill="none" stroke-width=".9"/><path d="M2.700 6h2.400M2.700 8.200h2.400" stroke="#d8d8d8" fill="none" stroke-width=".9"/></svg>
<svg class="a" style="left:1873.0px;top:46.1px;" width="7" height="3.8" viewBox="0 0 7 3.8"><path d="M0 0L3.5 3.8L7 0" fill="none" stroke="#cfcfcf" stroke-width="1.1"/></svg>
<svg class="a" style="left:1893.5px;top:37px;" width="16.5" height="17.5" viewBox="0 0 16.5 17.5"><path d="M5 7.800H1V16.500H15V7.800H11" stroke="#d8d8d8" fill="none" stroke-width="1.300"/><path d="M8 12V1.300M4.800 4.300L8 1L11.200 4.300" stroke="#d8d8d8" fill="none" stroke-width="1.300"/></svg>
<svg class="a" style="left:348.7px;top:77px;" width="6.4" height="6.4" viewBox="0 0 6.4 6.4"><path d="M.5 .5L5.900 5.900M5.900 .5L.5 5.900" stroke="#b4b4b4" stroke-width="1.700" fill="none"/></svg>
<svg class="a" style="left:262.5px;top:1067.5px;" width="5" height="10" viewBox="0 0 5 10"><path d="M.8 .5L4.200 5L.8 9.500" fill="none" stroke="#cfcfcf" stroke-width="1.100"/></svg>
<svg class="a" style="left:1223px;top:128.8px;" width="14" height="15" viewBox="0 0 14 15"><path d="M.6 2.500H5.500V.6H13.400V14.400H.6z" fill="none" stroke="#dcdcdc" stroke-width="1.200" stroke-linejoin="round"/><rect x="2.400" y="4.3" width="9.200" height="1.100" fill="#c8c8c8"/><rect x="2.400" y="6.3" width="9.200" height="1.100" fill="#c8c8c8"/><rect x="2.400" y="8.3" width="9.200" height="1.100" fill="#c8c8c8"/><rect x="2.400" y="10.3" width="9.200" height="1.100" fill="#c8c8c8"/><rect x="2.400" y="12.3" width="9.200" height="1.100" fill="#c8c8c8"/></svg>
<svg class="a" style="left:1223px;top:152.9px;" width="14" height="15" viewBox="0 0 14 15"><path d="M.6 2.500H5.500V.6H13.400V14.400H.6z" fill="none" stroke="#dcdcdc" stroke-width="1.200" stroke-linejoin="round"/><rect x="2.400" y="4.3" width="9.200" height="1.100" fill="#c8c8c8"/><rect x="2.400" y="6.3" width="9.200" height="1.100" fill="#c8c8c8"/><rect x="2.400" y="8.3" width="9.200" height="1.100" fill="#c8c8c8"/><rect x="2.400" y="10.3" width="9.200" height="1.100" fill="#c8c8c8"/><rect x="2.400" y="12.3" width="9.200" height="1.100" fill="#c8c8c8"/></svg>
<svg class="a" style="left:1223px;top:177.0px;" width="14" height="15" viewBox="0 0 14 15"><path d="M.6 2.500H5.500V.6H13.400V14.400H.6z" fill="none" stroke="#dcdcdc" stroke-width="1.200" stroke-linejoin="round"/><rect x="2.400" y="4.3" width="9.200" height="1.100" fill="#c8c8c8"/><rect x="2.400" y="6.3" width="9.200" height="1.100" fill="#c8c8c8"/><rect x="2.400" y="8.3" width="9.200" height="1.100" fill="#c8c8c8"/><rect x="2.400" y="10.3" width="9.200" height="1.100" fill="#c8c8c8"/><rect x="2.400" y="12.3" width="9.200" height="1.100" fill="#c8c8c8"/></svg>
<svg class="a" style="left:1223px;top:113px;" width="14" height="7" viewBox="0 0 14 7"><path d="M.6 0V6.400H13.400V0" fill="none" stroke="#dcdcdc" stroke-width="1.200"/><rect x="2.400" y=".4" width="9.200" height="1.100" fill="#c8c8c8"/><rect x="2.400" y="2.400" width="9.200" height="1.100" fill="#c8c8c8"/></svg>
<svg class="a" style="left:1356.5px;top:89.5px;" width="9.5" height="7" viewBox="0 0 9.5 7"><path d="M.6 .4L4 3.500L.6 6.600M5.400 .4L8.800 3.500L5.400 6.600" fill="none" stroke="#d8d8d8" stroke-width="1.200"/></svg>
<div class="a " style="left:1373px;top:86px;width:1px;height:14px;background:#9a9a9a;"></div>
<svg class="a" style="left:1385.5px;top:122.7px;" width="7" height="3.6" viewBox="0 0 7 3.6"><path d="M0 3.6L3.5 0L7 3.6" fill="none" stroke="#8c8c8c" stroke-width="1.1"/></svg>
<svg class="a" style="left:1385.5px;top:183.7px;" width="7" height="3.6" viewBox="0 0 7 3.6"><path d="M0 0L3.5 3.6L7 0" fill="none" stroke="#8c8c8c" stroke-width="1.1"/></svg>
<svg class="a" style="left:1295px;top:203px;" width="14.5" height="12.5" viewBox="0 0 14.5 12.5"><path d="M4.500 0H10.800L14.400 3.400V10.800H4.500z" fill="#d8d8d8"/><path d="M10.800 0V3.400H14.400z" fill="#535353"/><path d="M10.800 0V3.400H14.400" fill="none" stroke="#d8d8d8" stroke-width=".8"/><path d="M3.800 3.600V12.600M-.6 8.100H8.300" stroke="#535353" stroke-width="4" fill="none"/><path d="M3.800 4.200V12.200M-.2 8.200H7.800" stroke="#d8d8d8" stroke-width="2.100" fill="none"/></svg>
<svg class="a" style="left:1328px;top:203px;" width="13.5" height="11" viewBox="0 0 13.5 11"><path d="M0 2.200H3.300L4.300 0H9.200L10.200 2.200H13.500V10.600H0z" fill="#d8d8d8"/><circle cx="6.750" cy="6.300" r="3.100" fill="#535353"/><circle cx="6.750" cy="6.300" r="1.500" fill="#d8d8d8"/></svg>
<svg class="a" style="left:1357px;top:203px;" width="11" height="13" viewBox="0 0 11 13"><path d="M0 2.600H11M3.600 2.400V.8H7.400V2.400" fill="none" stroke="#d8d8d8" stroke-width="1.300"/><path d="M1.400 3.200L1.900 12.300H9.100L9.600 3.200" fill="none" stroke="#d8d8d8" stroke-width="1.300"/><path d="M3.800 4.200V11M5.500 4.200V11M7.200 4.200V11" stroke="#d8d8d8" stroke-width="1.100" fill="none"/></svg>
<svg class="a" style="left:1284px;top:224.5px;" width="20" height="4.0" viewBox="0 0 20 4.0"><rect x="0" y="0" width="1" height="4.0" fill="#404040"/><rect x="2" y="0" width="1" height="4.0" fill="#404040"/><rect x="4" y="0" width="1" height="4.0" fill="#404040"/><rect x="6" y="0" width="1" height="4.0" fill="#404040"/><rect x="8" y="0" width="1" height="4.0" fill="#404040"/><rect x="10" y="0" width="1" height="4.0" fill="#404040"/><rect x="12" y="0" width="1" height="4.0" fill="#404040"/><rect x="14" y="0" width="1" height="4.0" fill="#404040"/><rect x="16" y="0" width="1" height="4.0" fill="#404040"/><rect x="18" y="0" width="1" height="4.0" fill="#404040"/></svg>
<svg class="a" style="left:1412px;top:94px;" width="16" height="17" viewBox="0 0 16 17"><rect x=".6" y=".6" width="4.300" height="4.300" stroke="#d8d8d8" fill="none" stroke-width="1.100"/><rect x=".6" y="6.300" width="4.300" height="4.300" stroke="#d8d8d8" fill="none" stroke-width="1.100"/><rect x="0" y="12" width="5.500" height="5" fill="#d8d8d8"/><path d="M8.900 1.500L14.700 1L12.600 6z" fill="#d8d8d8"/><path d="M13.400 2.500C16.600 6.500 15.600 12 10.200 15.500C12.800 12 13.600 8.500 11.800 5z" fill="#d8d8d8"/></svg>
<svg class="a" style="left:1410.5px;top:136.5px;" width="15" height="17.5" viewBox="0 0 15 17.5"><path d="M7.500 .8L14.200 4.300V12.300L7.500 16.600L.8 12.300V4.300z" fill="#8a8a8a" stroke="#d8d8d8" stroke-width="1.300" stroke-linejoin="round"/><path d="M.8 4.300L7.500 8.200L14.200 4.300M7.500 8.200V16.600" stroke="#d8d8d8" fill="none" stroke-width="1.300"/></svg>
<svg class="a" style="left:1666.5px;top:148.2px;" width="7" height="3.6" viewBox="0 0 7 3.6"><path d="M0 3.6L3.5 0L7 3.6" fill="none" stroke="#8c8c8c" stroke-width="1.1"/></svg>
<svg class="a" style="left:1666.5px;top:245.7px;" width="7" height="3.6" viewBox="0 0 7 3.6"><path d="M0 0L3.5 3.6L7 0" fill="none" stroke="#8c8c8c" stroke-width="1.1"/></svg>
<svg class="a" style="left:1608.5px;top:266.5px;" width="11" height="11" viewBox="0 0 11 11"><path d="M.7 .7H10.300V10.300H4.200L.7 6.800z" fill="none" stroke="#d8d8d8" stroke-width="1.300" stroke-linejoin="round"/><path d="M.7 6.800H4.200V10.300z" fill="#d8d8d8"/></svg>
<svg class="a" style="left:1637px;top:265.5px;" width="11" height="13" viewBox="0 0 11 13"><path d="M0 2.600H11M3.600 2.400V.8H7.400V2.400" fill="none" stroke="#8a8a8a" stroke-width="1.300"/><path d="M1.400 3.200L1.900 12.300H9.100L9.600 3.200" fill="none" stroke="#8a8a8a" stroke-width="1.300"/><path d="M3.800 4.200V11M5.500 4.200V11M7.200 4.200V11" stroke="#8a8a8a" stroke-width="1.100" fill="none"/></svg>
<svg class="a" style="left:1453.75px;top:328px;" width="14.5" height="12.5" viewBox="0 0 14.5 12.5"><rect width="14.500" height="12.500" fill="#d6d6d6"/><path d="M1.500 11V8.500H3V6.500H4.500V5H6V7H7.500V5.500H9V7H10.500V8.500H12V9.500H13V11z" fill="#4a4a4a"/><rect x="9.800" y="2.200" width="2.200" height="2" fill="#4a4a4a"/></svg>
<svg class="a" style="left:1476.0px;top:327.0px;" width="17" height="13.4" viewBox="0 0 17 13.4"><rect width="17" height="13.4" fill="#dcdcdc"/><circle cx="8.5" cy="6.7" r="3.8859999999999997" fill="#383838"/></svg>
<svg class="a" style="left:1611.0px;top:369.0px;" width="15" height="13" viewBox="0 0 15 13"><rect width="15" height="13" fill="#dcdcdc"/><circle cx="7.5" cy="6.5" r="3.7699999999999996" fill="#383838"/></svg>
<svg class="a" style="left:1637px;top:369px;" width="14.5" height="14.5" viewBox="0 0 14.5 14.5"><path d="M1.300 1.300H10.200V6M1.300 1.300V11.200H5.500" stroke="#d8d8d8" fill="none" stroke-width="1.100"/><circle cx="1.300" cy="1.300" r="1.200" fill="#535353" stroke="#d8d8d8" stroke-width=".9"/><circle cx="10.200" cy="1.300" r="1.200" fill="#535353" stroke="#d8d8d8" stroke-width=".9"/><circle cx="1.300" cy="11.200" r="1.200" fill="#535353" stroke="#d8d8d8" stroke-width=".9"/><rect x="6.800" y="7" width="7.500" height="7.500" fill="#d8d8d8"/><path d="M10.550 8.300V13.200M8.100 10.750H13" stroke="#3a3a3a" stroke-width="1.200"/></svg>
<svg class="a" style="left:1667.0px;top:360.2px;" width="7" height="3.6" viewBox="0 0 7 3.6"><path d="M0 3.6L3.5 0L7 3.6" fill="none" stroke="#8c8c8c" stroke-width="1.1"/></svg>
<svg class="a" style="left:1667.0px;top:504.2px;" width="7" height="3.6" viewBox="0 0 7 3.6"><path d="M0 0L3.5 3.6L7 0" fill="none" stroke="#8c8c8c" stroke-width="1.1"/></svg>
<svg class="a" style="left:1641.2px;top:443.3px;" width="12" height="11.5" viewBox="0 0 12 11.5"><path d="M6 .6L11.300 6.500V9.300Q11.300 10.900 9.700 10.900H2.300Q.7 10.900 .7 9.300V6.500z" fill="#f2f2f2" stroke="#3a3a3a" stroke-width="1"/></svg>
<svg class="a" style="left:1447.3px;top:496.3px;" width="12" height="11.5" viewBox="0 0 12 11.5"><path d="M6 .6L11.300 6.500V9.300Q11.300 10.900 9.700 10.900H2.300Q.7 10.900 .7 9.300V6.500z" fill="#f2f2f2" stroke="#3a3a3a" stroke-width="1"/></svg>
<svg class="a" style="left:1550px;top:523px;" width="11" height="11.5" viewBox="0 0 11 11.5"><rect x=".8" y=".8" width="9.400" height="9.900" stroke="#d8d8d8" fill="none" stroke-width="1.300" stroke-dasharray="2.400 1.700"/></svg>
<svg class="a" style="left:1576px;top:522.5px;" width="15" height="14" viewBox="0 0 15 14"><path d="M4.800 4.300L1 8.300L7.500 13L14 8.300L10.200 4.300" stroke="#d8d8d8" fill="none" stroke-width="1.300" stroke-linejoin="round"/><path d="M9.500 .8H7.500V7" stroke="#d8d8d8" fill="none" stroke-width="1.300"/><path d="M4.800 6.300H10.200L7.500 10z" fill="#d8d8d8"/></svg>
<svg class="a" style="left:1605.5px;top:524.3px;" width="14" height="9" viewBox="0 0 14 9"><path d="M0 4.500C2 1.500 4.500 0 7 0S12 1.500 14 4.500C12 7.500 9.500 9 7 9S2 7.500 0 4.500z" fill="#e6e6e6"/><circle cx="7" cy="4.300" r="2.600" fill="#424242"/><circle cx="6.200" cy="3.500" r="1" fill="#e6e6e6"/></svg>
<svg class="a" style="left:1636px;top:523px;" width="11" height="13" viewBox="0 0 11 13"><path d="M0 2.600H11M3.600 2.400V.8H7.400V2.400" fill="none" stroke="#d8d8d8" stroke-width="1.300"/><path d="M1.400 3.200L1.900 12.300H9.100L9.600 3.200" fill="none" stroke="#d8d8d8" stroke-width="1.300"/><path d="M3.800 4.200V11M5.500 4.200V11M7.200 4.200V11" stroke="#d8d8d8" stroke-width="1.100" fill="none"/></svg>
<svg class="a" style="left:1451px;top:587px;" width="10" height="10.5" viewBox="0 0 10 10.5"><circle cx="6" cy="4" r="3.400" stroke="#d8d8d8" fill="none" stroke-width="1.300"/><path d="M3.600 6.600L.8 9.800" stroke="#d8d8d8" fill="none" stroke-width="1.900"/></svg>
<svg class="a" style="left:1522.0px;top:591.4px;" width="7" height="3.8" viewBox="0 0 7 3.8"><path d="M0 0L3.5 3.8L7 0" fill="none" stroke="#cfcfcf" stroke-width="1.1"/></svg>
<svg class="a" style="left:1562.9px;top:619.4px;" width="7" height="3.8" viewBox="0 0 7 3.8"><path d="M0 0L3.5 3.8L7 0" fill="none" stroke="#cfcfcf" stroke-width="1.1"/></svg>
<svg class="a" style="left:1661.5px;top:619.4px;" width="7" height="3.8" viewBox="0 0 7 3.8"><path d="M0 0L3.5 3.8L7 0" fill="none" stroke="#cfcfcf" stroke-width="1.1"/></svg>
<svg class="a" style="left:1661.5px;top:647.4px;" width="7" height="3.8" viewBox="0 0 7 3.8"><path d="M0 0L3.5 3.8L7 0" fill="none" stroke="#cfcfcf" stroke-width="1.1"/></svg>
<svg class="a" style="left:1542.75px;top:587px;" width="12.5" height="10.5" viewBox="0 0 12.5 10.5"><rect x=".6" y=".6" width="11.300" height="9.300" stroke="#d8d8d8" fill="none" stroke-width="1.200"/><path d="M2 8.300L4.300 4.800L5.800 6.800L7.600 4L10.500 8.300z" fill="#d8d8d8"/></svg>
<svg class="a" style="left:1568px;top:587px;" width="11" height="11" viewBox="0 0 11 11"><circle cx="5.500" cy="5.500" r="4.900" stroke="#d8d8d8" fill="none" stroke-width="1.200"/><path d="M9 2A4.900 4.900 0 0 1 2 9z" fill="#d8d8d8"/></svg>
<div class="a" style="left:1591px;top:583.300px;width:14px;text-align:center;font-family:'Liberation Serif',serif;font-weight:bold;font-size:13.500px;line-height:19px;color:#d8d8d8;">T</div>
<svg class="a" style="left:1615.5px;top:587px;" width="12" height="12" viewBox="0 0 12 12"><rect x="1.500" y="1.500" width="9" height="9" stroke="#d8d8d8" fill="none" stroke-width="1.200"/><rect x="0" y="0" width="3" height="3" fill="#535353" stroke="#d8d8d8" stroke-width=".9"/><rect x="9" y="0" width="3" height="3" fill="#535353" stroke="#d8d8d8" stroke-width=".9"/><rect x="0" y="9" width="3" height="3" fill="#535353" stroke="#d8d8d8" stroke-width=".9"/><rect x="9" y="9" width="3" height="3" fill="#535353" stroke="#d8d8d8" stroke-width=".9"/></svg>
<svg class="a" style="left:1640.5px;top:587px;" width="11" height="12.5" viewBox="0 0 11 12.5"><path d="M3 3.800V.6H7.600L10.400 3.400V10.200H6.200" stroke="#d8d8d8" fill="none" stroke-width="1.200" stroke-linejoin="round"/><path d="M7.600 .6V3.400H10.400" stroke="#d8d8d8" fill="none" stroke-width=".9"/><rect x="0" y="5" width="5.600" height="7.500" fill="#d8d8d8"/></svg>
<svg class="a" style="left:1478px;top:643.3px;" width="11" height="11.5" viewBox="0 0 11 11.5"><rect x=".5" y=".5" width="10" height="10.500" fill="#3a3a3a" stroke="#d8d8d8" stroke-width="1"/><rect x="1" y="1.0" width="3" height="3.200" fill="#d8d8d8"/><rect x="7" y="1.0" width="3" height="3.200" fill="#d8d8d8"/><rect x="4" y="4.2" width="3" height="3.200" fill="#d8d8d8"/><rect x="1" y="7.4" width="3" height="3.200" fill="#d8d8d8"/><rect x="7" y="7.4" width="3" height="3.200" fill="#d8d8d8"/></svg>
<svg class="a" style="left:1499px;top:643px;" width="13.5" height="13.5" viewBox="0 0 13.5 13.5"><path d="M13 .3c.5.400.4 1 .1 1.500L7.800 9 6 7.700 11.700.7c.4-.5.900-.7 1.300-.4z" fill="#d8d8d8"/><path d="M5.400 8.300l1.800 1.300c.2 1.400-.6 2.700-2.200 3.200c-1.600.500-3.400.300-4.800.6c1.300-.9 1.500-2 2-3.100c.6-1.300 1.800-2 3.200-2z" fill="#d8d8d8"/></svg>
<svg class="a" style="left:1521.2px;top:642.3px;" width="12.6" height="13.5" viewBox="0 0 12.6 13.5"><path d="M6.300 2.500V11M2.500 6.750H10.100" stroke="#d8d8d8" fill="none" stroke-width="1.200"/><path d="M6.300 0L8.500 2.800H4.100zM6.300 13.500L8.500 10.700H4.100zM0 6.750L2.700 4.600V8.900zM12.600 6.750L9.900 4.600V8.900z" fill="#d8d8d8"/></svg>
<svg class="a" style="left:1543px;top:643px;" width="14.5" height="13" viewBox="0 0 14.5 13"><path d="M3 0V13M0 2.800H14.500M0 10.500H14.500M11.800 0V2" stroke="#d8d8d8" fill="none" stroke-width="1.100"/><path d="M3 2.800H9L11.800 5.500V10.500" stroke="#d8d8d8" fill="none" stroke-width="1.200"/><path d="M11.800 4.500V13" stroke="#d8d8d8" fill="none" stroke-width="1.100" stroke-dasharray="1.300 1"/></svg>
<svg class="a" style="left:1567px;top:643.3px;" width="10.5" height="12.5" viewBox="0 0 10.5 12.5"><path d="M2.600 5.500V3.300A2.650 2.650 0 0 1 7.900 3.300V5.500" stroke="#d8d8d8" fill="none" stroke-width="1.500"/><rect x="0" y="5.300" width="10.500" height="7.200" rx=".6" fill="#d8d8d8"/><rect x="4.300" y="7.800" width="1.900" height="2.200" fill="#4a4a4a"/></svg>
<svg class="a" style="left:1447.4px;top:693.3px;" width="14" height="9" viewBox="0 0 14 9"><path d="M0 4.500C2 1.500 4.500 0 7 0S12 1.500 14 4.500C12 7.500 9.500 9 7 9S2 7.500 0 4.500z" fill="#e6e6e6"/><circle cx="7" cy="4.300" r="2.600" fill="#535353"/><circle cx="6.200" cy="3.500" r="1" fill="#e6e6e6"/></svg>
<svg class="a" style="left:1532.3px;top:689.5px;" width="7.7" height="15" viewBox="0 0 7.7 15"><rect x=".8" y=".8" width="6.100" height="8" rx="3" fill="none" stroke="#d0d0d0" stroke-width="1.400"/><rect x=".8" y="6.200" width="6.100" height="8" rx="3" fill="none" stroke="#d0d0d0" stroke-width="1.400"/><rect x="2.500" y="4.500" width="2.700" height="6" fill="#d0d0d0"/></svg>
<div class="a " style="left:1472.75px;top:667.75px;width:56.5px;height:58.5px;background:#ffffff;border:1px solid #262626;"></div>
<svg class="a" style="left:1474px;top:669px;overflow:hidden;" width="54" height="56" viewBox="0 0 54 56"><rect width="54" height="56" fill="#ffffff"/><g fill="url(#og)"><polygon points="1.4,11.6 3.2,10.8 4.6,10.2 6.3,9.3 6.4,7.5 6.8,5.9 8.4,5.9 9.2,4.7 10.2,3.6 11.1,4.3 12.3,5.8 12.5,7.2 14.0,7.1 16.4,7.1 18.3,7.5 19.8,8.4 21.2,9.7 22.2,11.2 23.0,12.6 23.8,11.2 25.1,9.6 26.2,8.7 27.5,7.6 29.3,7.1 32.2,7.0 34.1,7.1 34.2,5.9 35.3,4.9 36.3,3.9 37.0,4.7 37.8,5.8 38.0,6.3 39.7,6.2 40.0,7.5 40.0,9.2 41.2,10.4 43.0,11.7 44.5,12.5 44.6,13.8 43.8,15.6 43.0,17.5 42.0,19.6 40.9,21.4 39.6,23.2 38.6,24.8 37.5,26.6 36.6,28.1 36.3,29.8 37.0,32.2 37.8,34.5 38.6,36.1 39.2,37.3 38.6,38.5 37.2,40.0 35.9,42.1 34.9,44.5 34.1,46.9 33.3,49.0 32.8,51.1 32.5,53.2 31.7,54.2 29.3,55.0 26.2,55.4 23.0,55.5 18.3,55.3 15.1,54.7 13.0,54.0 12.3,52.4 11.9,50.5 11.3,48.2 10.4,45.8 9.0,43.2 8.0,41.1 6.4,39.0 5.5,37.5 6.3,36.4 7.1,34.5 7.7,32.4 8.5,30.3 8.6,28.0 8.0,26.1 7.2,24.6 6.3,22.7 5.6,20.9 4.6,19.0 3.6,16.9 2.7,14.8 1.9,13.0"/><polygon points="47.0,2.1 48.0,1.4 48.8,1.3 53.3,1.2 53.6,2.2 53.8,5.4 53.7,28.0 53.7,36.6 53.3,38.7 52.5,40.3 51.5,42.1 50.4,44.5 49.4,46.6 48.0,48.4 46.5,50.0 44.6,51.6 42.5,52.9 40.4,54.0 38.6,54.5 36.8,54.6 36.7,52.4 37.2,51.1 37.8,48.7 38.6,46.1 39.1,43.7 39.6,41.1 39.6,39.0 39.3,37.2 38.8,35.6 38.7,33.2 38.6,30.6 38.4,28.0 38.6,26.8 40.5,26.1 41.5,24.6 42.5,22.2 43.6,20.1 44.6,18.0 45.4,15.9 46.2,13.9 47.0,11.9 47.4,10.1 47.3,7.1 46.3,6.8 46.2,5.9 46.6,5.1 46.7,3.3"/><polygon points="0.6,42.1 2.5,41.7 4.6,41.6 6.8,41.6 7.5,42.7 8.2,44.8 9.0,46.9 9.4,49.0 9.6,51.6 9.7,55.5 5.6,55.4 5.5,54.0 5.0,51.6 4.4,49.5 3.5,47.9 2.6,47.0 1.7,46.6 0.7,46.3 0.7,44.2"/></g><ellipse cx="23.0" cy="4.6" rx="3.00" ry="3.15" fill="none" stroke="#1d6a64" stroke-width="1.300"/><defs><linearGradient id="og" x1="0" y1="0" x2="1" y2="1"><stop offset="0" stop-color="#dd8a2c"/><stop offset=".5" stop-color="#c96d1c"/><stop offset="1" stop-color="#d98a22"/></linearGradient></defs><g fill="#8a4510" opacity=".75"><path d="M9 21L15.500 20.500L16 27L17 31L13 36L9 39L7.500 31z"/><path d="M30.500 21L36.500 20.500L39 26L35 31L37 37L33 37L30 31z"/><path d="M51 27H54V36H50z"/></g><circle cx="14.500" cy="52" r="1.300" fill="#2f7a70"/><circle cx="29.500" cy="52" r="1.300" fill="#2f7a70"/><path d="M9.500 9.500L7 17M33.500 8.500L36 16" stroke="#7a5a30" stroke-width=".8" fill="none"/></svg>
<svg class="a" style="left:1541.9px;top:665.6px;" width="60.4" height="63.2" viewBox="0 0 60.4 63.2"><path d="M.5 21.500V.5H20M40.500 .5H59.900V21.500M59.900 43.500V62.700H40.500M20 62.700H.5V43.500" fill="none" stroke="#ffffff" stroke-width="1.100"/></svg>
<div class="a " style="left:1544px;top:667.75px;width:56.25px;height:58.5px;background:#ffffff;border:1px solid #262626;"></div>
<svg class="a" style="left:1545px;top:669px;overflow:hidden;" width="54.25" height="56" viewBox="0 0 54.25 56"><rect width="54.25" height="56" fill="#ffffff"/><g fill="#464646"><polygon points="1.4,11.6 3.3,10.8 4.6,10.2 6.3,9.3 6.4,7.5 6.8,5.9 8.4,5.9 9.2,4.7 10.3,3.6 11.2,4.3 12.4,5.8 12.5,7.2 14.1,7.1 16.5,7.1 18.3,7.5 19.9,8.4 21.3,9.7 22.3,11.2 23.1,12.6 23.9,11.2 25.2,9.6 26.3,8.7 27.6,7.6 29.5,7.1 32.4,7.0 34.2,7.1 34.4,5.9 35.4,4.9 36.5,3.9 37.1,4.7 37.9,5.8 38.2,6.3 39.9,6.2 40.2,7.5 40.2,9.2 41.4,10.4 43.2,11.7 44.7,12.5 44.8,13.8 44.0,15.6 43.2,17.5 42.2,19.6 41.1,21.4 39.8,23.2 38.7,24.8 37.7,26.6 36.8,28.1 36.5,29.8 37.1,32.2 37.9,34.5 38.7,36.1 39.4,37.3 38.7,38.5 37.4,40.0 36.1,42.1 35.0,44.5 34.2,46.9 33.4,49.0 32.9,51.1 32.6,53.2 31.9,54.2 29.5,55.0 26.3,55.4 23.1,55.5 18.3,55.3 15.2,54.7 13.1,54.0 12.4,52.4 12.0,50.5 11.3,48.2 10.4,45.8 9.1,43.2 8.0,41.1 6.4,39.0 5.5,37.5 6.3,36.4 7.1,34.5 7.8,32.4 8.6,30.3 8.7,28.0 8.0,26.1 7.2,24.6 6.3,22.7 5.6,20.9 4.6,19.0 3.7,16.9 2.7,14.8 1.9,13.0"/><polygon points="47.2,2.1 48.3,1.4 49.1,1.3 53.6,1.2 53.8,2.2 54.0,5.4 54.0,28.0 54.0,36.6 53.6,38.7 52.8,40.3 51.7,42.1 50.7,44.5 49.6,46.6 48.3,48.4 46.7,50.0 44.8,51.6 42.7,52.9 40.6,54.0 38.7,54.5 37.0,54.6 36.9,52.4 37.4,51.1 37.9,48.7 38.7,46.1 39.3,43.7 39.8,41.1 39.8,39.0 39.5,37.2 39.0,35.6 38.9,33.2 38.7,30.6 38.6,28.0 38.7,26.8 40.7,26.1 41.6,24.6 42.7,22.2 43.8,20.1 44.8,18.0 45.6,15.9 46.4,13.9 47.2,11.9 47.6,10.1 47.5,7.1 46.5,6.8 46.4,5.9 46.8,5.1 46.9,3.3"/><polygon points="0.6,42.1 2.5,41.7 4.6,41.6 6.8,41.6 7.5,42.7 8.3,44.8 9.1,46.9 9.5,49.0 9.6,51.6 9.7,55.5 5.6,55.4 5.5,54.0 5.0,51.6 4.4,49.5 3.5,47.9 2.6,47.0 1.7,46.6 0.7,46.3 0.7,44.2"/></g><ellipse cx="23.1" cy="4.6" rx="4.21" ry="4.33" fill="#464646"/></svg>
<div class="a " style="left:1446px;top:359px;width:32px;height:33.3px;background:#ffffff;border:1px solid #2a2a2a;"></div>
<svg class="a" style="left:1447px;top:360px;overflow:hidden;" width="30" height="31.3" viewBox="0 0 30 31.3"><rect width="30" height="31.3" fill="#ffffff"/><g fill="#464646"><polygon points="0.8,6.5 1.8,6.0 2.5,5.7 3.5,5.2 3.6,4.2 3.8,3.3 4.7,3.3 5.1,2.6 5.7,2.0 6.2,2.4 6.9,3.2 6.9,4.0 7.8,4.0 9.1,4.0 10.1,4.2 11.0,4.7 11.8,5.4 12.3,6.2 12.8,7.0 13.2,6.2 14.0,5.4 14.5,4.8 15.3,4.3 16.3,4.0 17.9,3.9 18.9,4.0 19.0,3.3 19.6,2.7 20.2,2.2 20.5,2.6 21.0,3.2 21.1,3.5 22.1,3.4 22.2,4.2 22.2,5.1 22.9,5.8 23.9,6.5 24.7,7.0 24.8,7.7 24.3,8.7 23.9,9.8 23.3,10.9 22.7,12.0 22.0,13.0 21.4,13.9 20.8,14.9 20.3,15.7 20.2,16.7 20.5,18.0 21.0,19.3 21.4,20.2 21.8,20.8 21.4,21.5 20.7,22.4 20.0,23.6 19.4,24.9 18.9,26.2 18.5,27.4 18.2,28.5 18.1,29.7 17.6,30.3 16.3,30.7 14.5,31.0 12.8,31.0 10.1,30.9 8.4,30.6 7.2,30.2 6.9,29.3 6.6,28.2 6.3,26.9 5.8,25.6 5.0,24.1 4.4,23.0 3.6,21.8 3.0,21.0 3.5,20.3 3.9,19.3 4.3,18.1 4.7,16.9 4.8,15.6 4.4,14.6 4.0,13.7 3.5,12.7 3.1,11.7 2.5,10.6 2.0,9.5 1.5,8.3 1.1,7.3"/><polygon points="26.1,1.2 26.7,0.8 27.1,0.7 29.6,0.7 29.8,1.2 29.9,3.0 29.8,15.6 29.8,20.5 29.6,21.6 29.2,22.5 28.6,23.6 28.0,24.9 27.4,26.0 26.7,27.1 25.8,28.0 24.8,28.8 23.6,29.6 22.4,30.2 21.4,30.5 20.5,30.5 20.4,29.3 20.7,28.5 21.0,27.2 21.4,25.8 21.7,24.4 22.0,23.0 22.0,21.8 21.9,20.8 21.6,19.9 21.5,18.6 21.4,17.1 21.3,15.6 21.4,15.0 22.5,14.6 23.0,13.7 23.6,12.4 24.2,11.2 24.8,10.1 25.2,8.9 25.7,7.8 26.1,6.7 26.3,5.6 26.3,4.0 25.7,3.8 25.7,3.3 25.9,2.9 26.0,1.8"/><polygon points="0.3,23.6 1.4,23.3 2.5,23.3 3.8,23.3 4.1,23.8 4.6,25.0 5.0,26.2 5.2,27.4 5.3,28.8 5.4,31.0 3.1,31.0 3.0,30.2 2.8,28.8 2.5,27.7 1.9,26.8 1.4,26.3 0.9,26.0 0.4,25.9 0.4,24.7"/></g><ellipse cx="12.8" cy="2.5" rx="2.33" ry="2.42" fill="#464646"/></svg>
<svg class="a" style="left:1473.5px;top:1063.5px;" width="14.5" height="8" viewBox="0 0 14.5 8"><rect x=".8" y=".8" width="7.400" height="6" rx="3" fill="none" stroke="#8c8c8c" stroke-width="1.400"/><rect x="6.300" y=".8" width="7.400" height="6" rx="3" fill="none" stroke="#8c8c8c" stroke-width="1.400"/><rect x="4.500" y="3.200" width="5.500" height="1.400" fill="#8c8c8c"/></svg>
<div class="a t" style="left:1502px;top:1058px;font-style:italic;font-weight:bold;font-size:13.500px;line-height:18px;color:#d8d8d8;letter-spacing:-.3px;transform:scaleX(.9);">fx</div>
<svg class="a" style="left:1516px;top:1076.5px;" width="3" height="2" viewBox="0 0 3 2"><path d="M0 0H3L1.500 2z" fill="#d0d0d0"/></svg>
<svg class="a" style="left:1528.0px;top:1062.5px;" width="13" height="10" viewBox="0 0 13 10"><rect width="13" height="10" fill="#dcdcdc"/><circle cx="6.5" cy="5.0" r="2.9" fill="#535353"/></svg>
<svg class="a" style="left:1556.5px;top:1063px;" width="11.5" height="11.5" viewBox="0 0 11.5 11.5"><circle cx="5.750" cy="5.750" r="5" stroke="#d8d8d8" fill="none" stroke-width="1.300"/><path d="M9.300 2.200A5 5 0 0 1 2.200 9.300z" fill="#d8d8d8"/></svg>
<svg class="a" style="left:1570px;top:1076.5px;" width="3" height="2" viewBox="0 0 3 2"><path d="M0 0H3L1.500 2z" fill="#d0d0d0"/></svg>
<svg class="a" style="left:1582.5px;top:1062.5px;" width="13" height="11" viewBox="0 0 13 11"><path d="M0 0H5.500L6.500 1.300H0z" fill="#d8d8d8"/><rect x="0" y="2.200" width="13" height="8.600" rx=".6" fill="#d8d8d8"/></svg>
<svg class="a" style="left:1610.5px;top:1063px;" width="11" height="11" viewBox="0 0 11 11"><path d="M.7 .7H10.300V10.300H4.200L.7 6.800z" fill="none" stroke="#d8d8d8" stroke-width="1.300" stroke-linejoin="round"/><path d="M.7 6.800H4.200V10.300z" fill="#d8d8d8"/></svg>
<svg class="a" style="left:1637px;top:1062px;" width="11" height="13" viewBox="0 0 11 13"><path d="M0 2.600H11M3.600 2.400V.8H7.400V2.400" fill="none" stroke="#d8d8d8" stroke-width="1.300"/><path d="M1.400 3.200L1.900 12.300H9.100L9.600 3.200" fill="none" stroke="#d8d8d8" stroke-width="1.300"/><path d="M3.800 4.200V11M5.500 4.200V11M7.200 4.200V11" stroke="#d8d8d8" stroke-width="1.100" fill="none"/></svg>
<svg class="a" style="left:1842.0px;top:124.6px;" width="7" height="3.8" viewBox="0 0 7 3.8"><path d="M0 0L3.5 3.8L7 0" fill="none" stroke="#9a9a9a" stroke-width="1.1"/></svg>
<svg class="a" style="left:1867px;top:120px;" width="12.5" height="12.5" viewBox="0 0 12.5 12.5"><rect x="0" y="0" width="5.600" height="5.600" fill="#f0f0f0"/><rect x="6.9" y="0" width="5.600" height="5.600" fill="#f0f0f0"/><rect x="0" y="6.9" width="5.600" height="5.600" fill="#f0f0f0"/><rect x="6.9" y="6.9" width="5.600" height="5.600" fill="#f0f0f0"/></svg>
<svg class="a" style="left:1892.7px;top:119.5px;" width="12" height="12" viewBox="0 0 12 12"><rect x="0" y="0.0" width="12" height="1.700" fill="#e8e8e8"/><rect x="0" y="3.5" width="12" height="1.700" fill="#e8e8e8"/><rect x="0" y="7.0" width="12" height="1.700" fill="#e8e8e8"/><rect x="0" y="10.5" width="12" height="1.700" fill="#e8e8e8"/></svg>
<svg class="a" style="left:1687.8px;top:149.5px;" width="11" height="11.5" viewBox="0 0 11 11.5"><circle cx="6.800" cy="4.300" r="3.600" stroke="#d8d8d8" fill="none" stroke-width="1.400"/><path d="M4.200 7.200L1 10.700" stroke="#d8d8d8" fill="none" stroke-width="2.100"/></svg>
<svg class="a" style="left:1899.5px;top:153.1px;" width="7" height="3.8" viewBox="0 0 7 3.8"><path d="M0 0L3.5 3.8L7 0" fill="none" stroke="#8a8a8a" stroke-width="1.1"/></svg>
<svg class="a" style="left:1775.5px;top:563px;" width="48.0" height="40.0" viewBox="0 0 48 40"><g fill="none" stroke="#6e6e6e" stroke-width="3.600" stroke-linecap="round"><path d="M26 35H13.500A11.500 11.500 0 0 1 13 12A14 14 0 0 1 40 11.500A11 11 0 0 1 45.500 24"/><path d="M15 23.500A6.500 6.500 0 0 1 26 19.500L32 25.500"/><path d="M22 11A9 9 0 0 1 37 16"/></g><path d="M29 26L43 40M43 26L29 40" stroke="#4e4e4e" stroke-width="8.500" fill="none"/><path d="M31.500 27.500L44 39.500M44 27.500L31.500 39.500" stroke="#6e6e6e" stroke-width="3.800" fill="none"/></svg>
<svg class="a" style="left:1859.5px;top:1061px;" width="16.32" height="13.600000000000001" viewBox="0 0 48 40"><g fill="none" stroke="#d0d0d0" stroke-width="3.600" stroke-linecap="round"><path d="M26 35H13.500A11.500 11.500 0 0 1 13 12A14 14 0 0 1 40 11.500A11 11 0 0 1 45.500 24"/><path d="M15 23.500A6.500 6.500 0 0 1 26 19.500L32 25.500"/><path d="M22 11A9 9 0 0 1 37 16"/></g><path d="M29 26L43 40M43 26L29 40" stroke="#535353" stroke-width="8.500" fill="none"/><path d="M31.500 27.500L44 39.500M44 27.500L31.500 39.500" stroke="#d0d0d0" stroke-width="3.800" fill="none"/></svg>
<svg class="a" style="left:1886px;top:1063px;" width="11" height="13" viewBox="0 0 11 13"><path d="M0 2.600H11M3.600 2.400V.8H7.400V2.400" fill="none" stroke="#6e6e6e" stroke-width="1.300"/><path d="M1.400 3.200L1.900 12.300H9.100L9.600 3.200" fill="none" stroke="#6e6e6e" stroke-width="1.300"/><path d="M3.800 4.200V11M5.500 4.200V11M7.200 4.200V11" stroke="#6e6e6e" stroke-width="1.100" fill="none"/></svg>
</body></html>
